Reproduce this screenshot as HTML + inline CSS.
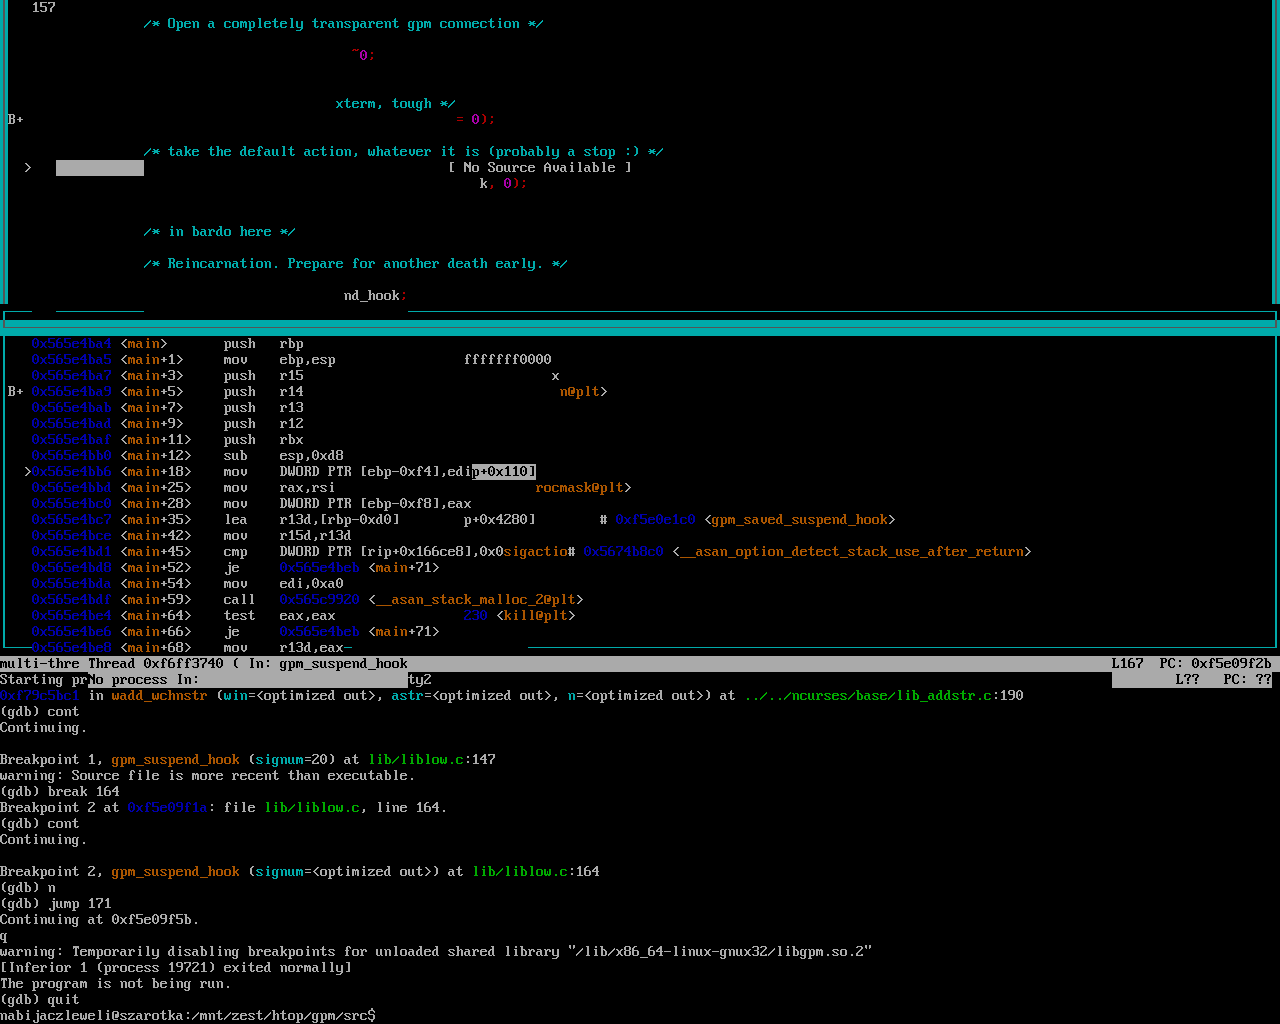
<!DOCTYPE html>
<html><head><meta charset="utf-8"><style>
html,body{margin:0;padding:0;background:#000;width:1280px;height:1024px;overflow:hidden}
svg{position:absolute;left:0;top:0;display:block}
#t div{position:absolute;left:0;white-space:pre;font-family:"Liberation Mono",monospace;font-size:13.33px;line-height:16px;color:transparent}
</style></head><body>
<div id="t">
<div style="top:0px">    157</div>
<div style="top:16px">                  /* Open a completely transparent gpm connection */</div>
<div style="top:48px">                                            ~0;</div>
<div style="top:96px">                                          xterm, tough */</div>
<div style="top:112px"> B+                                                      = 0);</div>
<div style="top:144px">                  /* take the default action, whatever it is (probably a stop :) */</div>
<div style="top:160px">   &gt;                                                    [ No Source Available ]</div>
<div style="top:176px">                                                            k, 0);</div>
<div style="top:224px">                  /* in bardo here */</div>
<div style="top:256px">                  /* Reincarnation. Prepare for another death early. */</div>
<div style="top:288px">                                           nd_hook;</div>
<div style="top:336px">    0x565e4ba4 &lt;main&gt;       push   rbp</div>
<div style="top:352px">    0x565e4ba5 &lt;main+1&gt;     mov    ebp,esp                fffffff0000</div>
<div style="top:368px">    0x565e4ba7 &lt;main+3&gt;     push   r15                               x</div>
<div style="top:384px"> B+ 0x565e4ba9 &lt;main+5&gt;     push   r14                                n@plt&gt;</div>
<div style="top:400px">    0x565e4bab &lt;main+7&gt;     push   r13</div>
<div style="top:416px">    0x565e4bad &lt;main+9&gt;     push   r12</div>
<div style="top:432px">    0x565e4baf &lt;main+11&gt;    push   rbx</div>
<div style="top:448px">    0x565e4bb0 &lt;main+12&gt;    sub    esp,0xd8</div>
<div style="top:464px">   &gt;0x565e4bb6 &lt;main+18&gt;    mov    DWORD PTR [ebp-0xf4],edip+0x110]</div>
<div style="top:480px">    0x565e4bbd &lt;main+25&gt;    mov    rax,rsi                         rocmask@plt&gt;</div>
<div style="top:496px">    0x565e4bc0 &lt;main+28&gt;    mov    DWORD PTR [ebp-0xf8],eax</div>
<div style="top:512px">    0x565e4bc7 &lt;main+35&gt;    lea    r13d,[rbp-0xd0]        p+0x4280]        # 0xf5e0e1c0 &lt;gpm_saved_suspend_hook&gt;</div>
<div style="top:528px">    0x565e4bce &lt;main+42&gt;    mov    r15d,r13d</div>
<div style="top:544px">    0x565e4bd1 &lt;main+45&gt;    cmp    DWORD PTR [rip+0x166ce8],0x0sigactio# 0x5674b8c0 &lt;__asan_option_detect_stack_use_after_return&gt;</div>
<div style="top:560px">    0x565e4bd8 &lt;main+52&gt;    je     0x565e4beb &lt;main+71&gt;</div>
<div style="top:576px">    0x565e4bda &lt;main+54&gt;    mov    edi,0xa0</div>
<div style="top:592px">    0x565e4bdf &lt;main+59&gt;    call   0x565c9920 &lt;__asan_stack_malloc_2@plt&gt;</div>
<div style="top:608px">    0x565e4be4 &lt;main+64&gt;    test   eax,eax                230 &lt;kill@plt&gt;</div>
<div style="top:624px">    0x565e4be6 &lt;main+66&gt;    je     0x565e4beb &lt;main+71&gt;</div>
<div style="top:640px">    0x565e4be8 &lt;main+68&gt;    mov    r13d,eax</div>
<div style="top:656px">multi-thre Thread 0xf6ff3740 ( In: gpm_suspend_hook                                                                                        L167  PC: 0xf5e09f2b</div>
<div style="top:672px">Starting prNo process In:                          ty2                                                                                             L??   PC: ??</div>
<div style="top:688px">0xf79c5bc1 in wadd_wchnstr (win=&lt;optimized out&gt;, astr=&lt;optimized out&gt;, n=&lt;optimized out&gt;) at ../../ncurses/base/lib_addstr.c:190</div>
<div style="top:704px">(gdb) cont</div>
<div style="top:720px">Continuing.</div>
<div style="top:752px">Breakpoint 1, gpm_suspend_hook (signum=20) at lib/liblow.c:147</div>
<div style="top:768px">warning: Source file is more recent than executable.</div>
<div style="top:784px">(gdb) break 164</div>
<div style="top:800px">Breakpoint 2 at 0xf5e09f1a: file lib/liblow.c, line 164.</div>
<div style="top:816px">(gdb) cont</div>
<div style="top:832px">Continuing.</div>
<div style="top:864px">Breakpoint 2, gpm_suspend_hook (signum=&lt;optimized out&gt;) at lib/liblow.c:164</div>
<div style="top:880px">(gdb) n</div>
<div style="top:896px">(gdb) jump 171</div>
<div style="top:912px">Continuing at 0xf5e09f5b.</div>
<div style="top:928px">q</div>
<div style="top:944px">warning: Temporarily disabling breakpoints for unloaded shared library &quot;/lib/x86_64-linux-gnux32/libgpm.so.2&quot;</div>
<div style="top:960px">[Inferior 1 (process 19721) exited normally]</div>
<div style="top:976px">The program is not being run.</div>
<div style="top:992px">(gdb) quit</div>
<div style="top:1008px">nabijaczleweli@szarotka:/mnt/zest/htop/gpm/src$</div>
</div>
<svg width="1280" height="1024" viewBox="0 0 1280 1024" shape-rendering="crispEdges">
<defs>
<path id="g22" d="M1 1h2v1h-2zM5 1h2v1h-2zM1 2h2v1h-2zM5 2h2v1h-2zM1 3h2v1h-2zM5 3h2v1h-2zM2 4h1v1h-1zM5 4h1v1h-1z"/>
<path id="g23" d="M1 3h2v1h-2zM4 3h2v1h-2zM1 4h2v1h-2zM4 4h2v1h-2zM0 5h7v1h-7zM1 6h2v1h-2zM4 6h2v1h-2zM1 7h2v1h-2zM4 7h2v1h-2zM1 8h2v1h-2zM4 8h2v1h-2zM0 9h7v1h-7zM1 10h2v1h-2zM4 10h2v1h-2zM1 11h2v1h-2zM4 11h2v1h-2z"/>
<path id="g24" d="M3 0h2v1h-2zM3 1h2v1h-2zM1 2h5v1h-5zM0 3h2v1h-2zM5 3h2v1h-2zM0 4h2v1h-2zM6 4h1v1h-1zM0 5h2v1h-2zM1 6h5v1h-5zM5 7h2v1h-2zM5 8h2v1h-2zM0 9h1v1h-1zM5 9h2v1h-2zM0 10h2v1h-2zM5 10h2v1h-2zM1 11h5v1h-5zM3 12h2v1h-2zM3 13h2v1h-2z"/>
<path id="g28" d="M4 2h2v1h-2zM3 3h2v1h-2zM2 4h2v1h-2zM2 5h2v1h-2zM2 6h2v1h-2zM2 7h2v1h-2zM2 8h2v1h-2zM2 9h2v1h-2zM3 10h2v1h-2zM4 11h2v1h-2z"/>
<path id="g29" d="M2 2h2v1h-2zM3 3h2v1h-2zM4 4h2v1h-2zM4 5h2v1h-2zM4 6h2v1h-2zM4 7h2v1h-2zM4 8h2v1h-2zM4 9h2v1h-2zM3 10h2v1h-2zM2 11h2v1h-2z"/>
<path id="g2a" d="M1 5h2v1h-2zM5 5h2v1h-2zM2 6h4v1h-4zM0 7h8v1h-8zM2 8h4v1h-4zM1 9h2v1h-2zM5 9h2v1h-2z"/>
<path id="g2b" d="M3 5h2v1h-2zM3 6h2v1h-2zM1 7h6v1h-6zM3 8h2v1h-2zM3 9h2v1h-2z"/>
<path id="g2c" d="M3 9h2v1h-2zM3 10h2v1h-2zM3 11h2v1h-2zM2 12h2v1h-2z"/>
<path id="g2d" d="M0 7h7v1h-7z"/>
<path id="g2e" d="M3 10h2v1h-2zM3 11h2v1h-2z"/>
<path id="g2f" d="M6 4h1v1h-1zM5 5h2v1h-2zM4 6h2v1h-2zM3 7h2v1h-2zM2 8h2v1h-2zM1 9h2v1h-2zM0 10h2v1h-2zM0 11h1v1h-1z"/>
<path id="g30" d="M2 2h3v1h-3zM1 3h2v1h-2zM4 3h2v1h-2zM0 4h2v1h-2zM5 4h2v1h-2zM0 5h2v1h-2zM5 5h2v1h-2zM0 6h2v1h-2zM3 6h1v1h-1zM5 6h2v1h-2zM0 7h2v1h-2zM3 7h1v1h-1zM5 7h2v1h-2zM0 8h2v1h-2zM5 8h2v1h-2zM0 9h2v1h-2zM5 9h2v1h-2zM1 10h2v1h-2zM4 10h2v1h-2zM2 11h3v1h-3z"/>
<path id="g31" d="M3 2h2v1h-2zM2 3h3v1h-3zM1 4h4v1h-4zM3 5h2v1h-2zM3 6h2v1h-2zM3 7h2v1h-2zM3 8h2v1h-2zM3 9h2v1h-2zM3 10h2v1h-2zM1 11h6v1h-6z"/>
<path id="g32" d="M1 2h5v1h-5zM0 3h2v1h-2zM5 3h2v1h-2zM5 4h2v1h-2zM4 5h2v1h-2zM3 6h2v1h-2zM2 7h2v1h-2zM1 8h2v1h-2zM0 9h2v1h-2zM0 10h2v1h-2zM5 10h2v1h-2zM0 11h7v1h-7z"/>
<path id="g33" d="M1 2h5v1h-5zM0 3h2v1h-2zM5 3h2v1h-2zM5 4h2v1h-2zM5 5h2v1h-2zM2 6h4v1h-4zM5 7h2v1h-2zM5 8h2v1h-2zM5 9h2v1h-2zM0 10h2v1h-2zM5 10h2v1h-2zM1 11h5v1h-5z"/>
<path id="g34" d="M4 2h2v1h-2zM3 3h3v1h-3zM2 4h4v1h-4zM1 5h2v1h-2zM4 5h2v1h-2zM0 6h2v1h-2zM4 6h2v1h-2zM0 7h7v1h-7zM4 8h2v1h-2zM4 9h2v1h-2zM4 10h2v1h-2zM3 11h4v1h-4z"/>
<path id="g35" d="M0 2h7v1h-7zM0 3h2v1h-2zM0 4h2v1h-2zM0 5h2v1h-2zM0 6h6v1h-6zM5 7h2v1h-2zM5 8h2v1h-2zM5 9h2v1h-2zM0 10h2v1h-2zM5 10h2v1h-2zM1 11h5v1h-5z"/>
<path id="g36" d="M2 2h3v1h-3zM1 3h2v1h-2zM0 4h2v1h-2zM0 5h2v1h-2zM0 6h6v1h-6zM0 7h2v1h-2zM5 7h2v1h-2zM0 8h2v1h-2zM5 8h2v1h-2zM0 9h2v1h-2zM5 9h2v1h-2zM0 10h2v1h-2zM5 10h2v1h-2zM1 11h5v1h-5z"/>
<path id="g37" d="M0 2h7v1h-7zM0 3h2v1h-2zM5 3h2v1h-2zM5 4h2v1h-2zM5 5h2v1h-2zM4 6h2v1h-2zM3 7h2v1h-2zM2 8h2v1h-2zM2 9h2v1h-2zM2 10h2v1h-2zM2 11h2v1h-2z"/>
<path id="g38" d="M1 2h5v1h-5zM0 3h2v1h-2zM5 3h2v1h-2zM0 4h2v1h-2zM5 4h2v1h-2zM0 5h2v1h-2zM5 5h2v1h-2zM1 6h5v1h-5zM0 7h2v1h-2zM5 7h2v1h-2zM0 8h2v1h-2zM5 8h2v1h-2zM0 9h2v1h-2zM5 9h2v1h-2zM0 10h2v1h-2zM5 10h2v1h-2zM1 11h5v1h-5z"/>
<path id="g39" d="M1 2h5v1h-5zM0 3h2v1h-2zM5 3h2v1h-2zM0 4h2v1h-2zM5 4h2v1h-2zM0 5h2v1h-2zM5 5h2v1h-2zM1 6h6v1h-6zM5 7h2v1h-2zM5 8h2v1h-2zM5 9h2v1h-2zM4 10h2v1h-2zM1 11h4v1h-4z"/>
<path id="g3a" d="M3 4h2v1h-2zM3 5h2v1h-2zM3 9h2v1h-2zM3 10h2v1h-2z"/>
<path id="g3b" d="M3 4h2v1h-2zM3 5h2v1h-2zM3 9h2v1h-2zM3 10h2v1h-2zM2 11h2v1h-2z"/>
<path id="g3c" d="M5 3h2v1h-2zM4 4h2v1h-2zM3 5h2v1h-2zM2 6h2v1h-2zM1 7h2v1h-2zM2 8h2v1h-2zM3 9h2v1h-2zM4 10h2v1h-2zM5 11h2v1h-2z"/>
<path id="g3d" d="M1 5h6v1h-6zM1 8h6v1h-6z"/>
<path id="g3e" d="M1 3h2v1h-2zM2 4h2v1h-2zM3 5h2v1h-2zM4 6h2v1h-2zM5 7h2v1h-2zM4 8h2v1h-2zM3 9h2v1h-2zM2 10h2v1h-2zM1 11h2v1h-2z"/>
<path id="g3f" d="M1 2h5v1h-5zM0 3h2v1h-2zM5 3h2v1h-2zM0 4h2v1h-2zM5 4h2v1h-2zM4 5h2v1h-2zM3 6h2v1h-2zM3 7h2v1h-2zM3 8h2v1h-2zM3 10h2v1h-2zM3 11h2v1h-2z"/>
<path id="g40" d="M1 3h5v1h-5zM0 4h2v1h-2zM5 4h2v1h-2zM0 5h2v1h-2zM5 5h2v1h-2zM0 6h2v1h-2zM3 6h4v1h-4zM0 7h2v1h-2zM3 7h4v1h-4zM0 8h2v1h-2zM3 8h4v1h-4zM0 9h2v1h-2zM3 9h3v1h-3zM0 10h2v1h-2zM1 11h5v1h-5z"/>
<path id="g41" d="M3 2h1v1h-1zM2 3h3v1h-3zM1 4h2v1h-2zM4 4h2v1h-2zM0 5h2v1h-2zM5 5h2v1h-2zM0 6h2v1h-2zM5 6h2v1h-2zM0 7h7v1h-7zM0 8h2v1h-2zM5 8h2v1h-2zM0 9h2v1h-2zM5 9h2v1h-2zM0 10h2v1h-2zM5 10h2v1h-2zM0 11h2v1h-2zM5 11h2v1h-2z"/>
<path id="g42" d="M0 2h6v1h-6zM1 3h2v1h-2zM5 3h2v1h-2zM1 4h2v1h-2zM5 4h2v1h-2zM1 5h2v1h-2zM5 5h2v1h-2zM1 6h5v1h-5zM1 7h2v1h-2zM5 7h2v1h-2zM1 8h2v1h-2zM5 8h2v1h-2zM1 9h2v1h-2zM5 9h2v1h-2zM1 10h2v1h-2zM5 10h2v1h-2zM0 11h6v1h-6z"/>
<path id="g43" d="M2 2h4v1h-4zM1 3h2v1h-2zM5 3h2v1h-2zM0 4h2v1h-2zM6 4h1v1h-1zM0 5h2v1h-2zM0 6h2v1h-2zM0 7h2v1h-2zM0 8h2v1h-2zM0 9h2v1h-2zM6 9h1v1h-1zM1 10h2v1h-2zM5 10h2v1h-2zM2 11h4v1h-4z"/>
<path id="g44" d="M0 2h5v1h-5zM1 3h2v1h-2zM4 3h2v1h-2zM1 4h2v1h-2zM5 4h2v1h-2zM1 5h2v1h-2zM5 5h2v1h-2zM1 6h2v1h-2zM5 6h2v1h-2zM1 7h2v1h-2zM5 7h2v1h-2zM1 8h2v1h-2zM5 8h2v1h-2zM1 9h2v1h-2zM5 9h2v1h-2zM1 10h2v1h-2zM4 10h2v1h-2zM0 11h5v1h-5z"/>
<path id="g49" d="M2 2h4v1h-4zM3 3h2v1h-2zM3 4h2v1h-2zM3 5h2v1h-2zM3 6h2v1h-2zM3 7h2v1h-2zM3 8h2v1h-2zM3 9h2v1h-2zM3 10h2v1h-2zM2 11h4v1h-4z"/>
<path id="g4c" d="M0 2h4v1h-4zM1 3h2v1h-2zM1 4h2v1h-2zM1 5h2v1h-2zM1 6h2v1h-2zM1 7h2v1h-2zM1 8h2v1h-2zM1 9h2v1h-2zM6 9h1v1h-1zM1 10h2v1h-2zM5 10h2v1h-2zM0 11h7v1h-7z"/>
<path id="g4e" d="M0 2h2v1h-2zM5 2h2v1h-2zM0 3h3v1h-3zM5 3h2v1h-2zM0 4h4v1h-4zM5 4h2v1h-2zM0 5h7v1h-7zM0 6h2v1h-2zM3 6h4v1h-4zM0 7h2v1h-2zM4 7h3v1h-3zM0 8h2v1h-2zM5 8h2v1h-2zM0 9h2v1h-2zM5 9h2v1h-2zM0 10h2v1h-2zM5 10h2v1h-2zM0 11h2v1h-2zM5 11h2v1h-2z"/>
<path id="g4f" d="M1 2h5v1h-5zM0 3h2v1h-2zM5 3h2v1h-2zM0 4h2v1h-2zM5 4h2v1h-2zM0 5h2v1h-2zM5 5h2v1h-2zM0 6h2v1h-2zM5 6h2v1h-2zM0 7h2v1h-2zM5 7h2v1h-2zM0 8h2v1h-2zM5 8h2v1h-2zM0 9h2v1h-2zM5 9h2v1h-2zM0 10h2v1h-2zM5 10h2v1h-2zM1 11h5v1h-5z"/>
<path id="g50" d="M0 2h6v1h-6zM1 3h2v1h-2zM5 3h2v1h-2zM1 4h2v1h-2zM5 4h2v1h-2zM1 5h2v1h-2zM5 5h2v1h-2zM1 6h5v1h-5zM1 7h2v1h-2zM1 8h2v1h-2zM1 9h2v1h-2zM1 10h2v1h-2zM0 11h4v1h-4z"/>
<path id="g52" d="M0 2h6v1h-6zM1 3h2v1h-2zM5 3h2v1h-2zM1 4h2v1h-2zM5 4h2v1h-2zM1 5h2v1h-2zM5 5h2v1h-2zM1 6h5v1h-5zM1 7h2v1h-2zM4 7h2v1h-2zM1 8h2v1h-2zM5 8h2v1h-2zM1 9h2v1h-2zM5 9h2v1h-2zM1 10h2v1h-2zM5 10h2v1h-2zM0 11h3v1h-3zM5 11h2v1h-2z"/>
<path id="g53" d="M1 2h5v1h-5zM0 3h2v1h-2zM5 3h2v1h-2zM0 4h2v1h-2zM5 4h2v1h-2zM1 5h2v1h-2zM2 6h3v1h-3zM4 7h2v1h-2zM5 8h2v1h-2zM0 9h2v1h-2zM5 9h2v1h-2zM0 10h2v1h-2zM5 10h2v1h-2zM1 11h5v1h-5z"/>
<path id="g54" d="M1 2h6v1h-6zM1 3h6v1h-6zM1 4h1v1h-1zM3 4h2v1h-2zM6 4h1v1h-1zM3 5h2v1h-2zM3 6h2v1h-2zM3 7h2v1h-2zM3 8h2v1h-2zM3 9h2v1h-2zM3 10h2v1h-2zM2 11h4v1h-4z"/>
<path id="g57" d="M0 2h2v1h-2zM5 2h2v1h-2zM0 3h2v1h-2zM5 3h2v1h-2zM0 4h2v1h-2zM5 4h2v1h-2zM0 5h2v1h-2zM5 5h2v1h-2zM0 6h2v1h-2zM3 6h1v1h-1zM5 6h2v1h-2zM0 7h2v1h-2zM3 7h1v1h-1zM5 7h2v1h-2zM0 8h2v1h-2zM3 8h1v1h-1zM5 8h2v1h-2zM0 9h7v1h-7zM0 10h3v1h-3zM4 10h3v1h-3zM1 11h2v1h-2zM4 11h2v1h-2z"/>
<path id="g5b" d="M2 2h4v1h-4zM2 3h2v1h-2zM2 4h2v1h-2zM2 5h2v1h-2zM2 6h2v1h-2zM2 7h2v1h-2zM2 8h2v1h-2zM2 9h2v1h-2zM2 10h2v1h-2zM2 11h4v1h-4z"/>
<path id="g5d" d="M2 2h4v1h-4zM4 3h2v1h-2zM4 4h2v1h-2zM4 5h2v1h-2zM4 6h2v1h-2zM4 7h2v1h-2zM4 8h2v1h-2zM4 9h2v1h-2zM4 10h2v1h-2zM2 11h4v1h-4z"/>
<path id="g5f" d="M0 13h8v1h-8z"/>
<path id="g61" d="M1 5h4v1h-4zM4 6h2v1h-2zM1 7h5v1h-5zM0 8h2v1h-2zM4 8h2v1h-2zM0 9h2v1h-2zM4 9h2v1h-2zM0 10h2v1h-2zM4 10h2v1h-2zM1 11h3v1h-3zM5 11h2v1h-2z"/>
<path id="g62" d="M0 2h3v1h-3zM1 3h2v1h-2zM1 4h2v1h-2zM1 5h4v1h-4zM1 6h2v1h-2zM4 6h2v1h-2zM1 7h2v1h-2zM5 7h2v1h-2zM1 8h2v1h-2zM5 8h2v1h-2zM1 9h2v1h-2zM5 9h2v1h-2zM1 10h2v1h-2zM5 10h2v1h-2zM1 11h5v1h-5z"/>
<path id="g63" d="M1 5h5v1h-5zM0 6h2v1h-2zM5 6h2v1h-2zM0 7h2v1h-2zM0 8h2v1h-2zM0 9h2v1h-2zM0 10h2v1h-2zM5 10h2v1h-2zM1 11h5v1h-5z"/>
<path id="g64" d="M3 2h3v1h-3zM4 3h2v1h-2zM4 4h2v1h-2zM2 5h4v1h-4zM1 6h2v1h-2zM4 6h2v1h-2zM0 7h2v1h-2zM4 7h2v1h-2zM0 8h2v1h-2zM4 8h2v1h-2zM0 9h2v1h-2zM4 9h2v1h-2zM0 10h2v1h-2zM4 10h2v1h-2zM1 11h3v1h-3zM5 11h2v1h-2z"/>
<path id="g65" d="M1 5h5v1h-5zM0 6h2v1h-2zM5 6h2v1h-2zM0 7h7v1h-7zM0 8h2v1h-2zM0 9h2v1h-2zM0 10h2v1h-2zM5 10h2v1h-2zM1 11h5v1h-5z"/>
<path id="g66" d="M3 2h3v1h-3zM2 3h2v1h-2zM5 3h2v1h-2zM2 4h2v1h-2zM6 4h1v1h-1zM2 5h2v1h-2zM1 6h4v1h-4zM2 7h2v1h-2zM2 8h2v1h-2zM2 9h2v1h-2zM2 10h2v1h-2zM1 11h4v1h-4z"/>
<path id="g67" d="M1 5h3v1h-3zM5 5h2v1h-2zM0 6h2v1h-2zM4 6h2v1h-2zM0 7h2v1h-2zM4 7h2v1h-2zM0 8h2v1h-2zM4 8h2v1h-2zM0 9h2v1h-2zM4 9h2v1h-2zM0 10h2v1h-2zM4 10h2v1h-2zM1 11h5v1h-5zM4 12h2v1h-2zM0 13h2v1h-2zM4 13h2v1h-2zM1 14h4v1h-4z"/>
<path id="g68" d="M0 2h3v1h-3zM1 3h2v1h-2zM1 4h2v1h-2zM1 5h2v1h-2zM4 5h2v1h-2zM1 6h3v1h-3zM5 6h2v1h-2zM1 7h2v1h-2zM5 7h2v1h-2zM1 8h2v1h-2zM5 8h2v1h-2zM1 9h2v1h-2zM5 9h2v1h-2zM1 10h2v1h-2zM5 10h2v1h-2zM0 11h3v1h-3zM5 11h2v1h-2z"/>
<path id="g69" d="M3 2h2v1h-2zM3 3h2v1h-2zM2 5h3v1h-3zM3 6h2v1h-2zM3 7h2v1h-2zM3 8h2v1h-2zM3 9h2v1h-2zM3 10h2v1h-2zM2 11h4v1h-4z"/>
<path id="g6a" d="M5 2h2v1h-2zM5 3h2v1h-2zM4 5h3v1h-3zM5 6h2v1h-2zM5 7h2v1h-2zM5 8h2v1h-2zM5 9h2v1h-2zM5 10h2v1h-2zM5 11h2v1h-2zM1 12h2v1h-2zM5 12h2v1h-2zM1 13h2v1h-2zM5 13h2v1h-2zM2 14h4v1h-4z"/>
<path id="g6b" d="M0 2h3v1h-3zM1 3h2v1h-2zM1 4h2v1h-2zM1 5h2v1h-2zM5 5h2v1h-2zM1 6h2v1h-2zM4 6h2v1h-2zM1 7h4v1h-4zM1 8h4v1h-4zM1 9h2v1h-2zM4 9h2v1h-2zM1 10h2v1h-2zM5 10h2v1h-2zM0 11h3v1h-3zM5 11h2v1h-2z"/>
<path id="g6c" d="M2 2h3v1h-3zM3 3h2v1h-2zM3 4h2v1h-2zM3 5h2v1h-2zM3 6h2v1h-2zM3 7h2v1h-2zM3 8h2v1h-2zM3 9h2v1h-2zM3 10h2v1h-2zM2 11h4v1h-4z"/>
<path id="g6d" d="M0 5h3v1h-3zM4 5h2v1h-2zM0 6h7v1h-7zM0 7h2v1h-2zM3 7h1v1h-1zM5 7h2v1h-2zM0 8h2v1h-2zM3 8h1v1h-1zM5 8h2v1h-2zM0 9h2v1h-2zM3 9h1v1h-1zM5 9h2v1h-2zM0 10h2v1h-2zM3 10h1v1h-1zM5 10h2v1h-2zM0 11h2v1h-2zM5 11h2v1h-2z"/>
<path id="g6e" d="M0 5h2v1h-2zM3 5h3v1h-3zM1 6h2v1h-2zM5 6h2v1h-2zM1 7h2v1h-2zM5 7h2v1h-2zM1 8h2v1h-2zM5 8h2v1h-2zM1 9h2v1h-2zM5 9h2v1h-2zM1 10h2v1h-2zM5 10h2v1h-2zM1 11h2v1h-2zM5 11h2v1h-2z"/>
<path id="g6f" d="M1 5h5v1h-5zM0 6h2v1h-2zM5 6h2v1h-2zM0 7h2v1h-2zM5 7h2v1h-2zM0 8h2v1h-2zM5 8h2v1h-2zM0 9h2v1h-2zM5 9h2v1h-2zM0 10h2v1h-2zM5 10h2v1h-2zM1 11h5v1h-5z"/>
<path id="g70" d="M0 5h2v1h-2zM3 5h3v1h-3zM1 6h2v1h-2zM5 6h2v1h-2zM1 7h2v1h-2zM5 7h2v1h-2zM1 8h2v1h-2zM5 8h2v1h-2zM1 9h2v1h-2zM5 9h2v1h-2zM1 10h2v1h-2zM5 10h2v1h-2zM1 11h5v1h-5zM1 12h2v1h-2zM1 13h2v1h-2zM0 14h4v1h-4z"/>
<path id="g71" d="M1 5h3v1h-3zM5 5h2v1h-2zM0 6h2v1h-2zM4 6h2v1h-2zM0 7h2v1h-2zM4 7h2v1h-2zM0 8h2v1h-2zM4 8h2v1h-2zM0 9h2v1h-2zM4 9h2v1h-2zM0 10h2v1h-2zM4 10h2v1h-2zM1 11h5v1h-5zM4 12h2v1h-2zM4 13h2v1h-2zM3 14h4v1h-4z"/>
<path id="g72" d="M0 5h2v1h-2zM3 5h3v1h-3zM1 6h3v1h-3zM5 6h2v1h-2zM1 7h2v1h-2zM5 7h2v1h-2zM1 8h2v1h-2zM1 9h2v1h-2zM1 10h2v1h-2zM0 11h4v1h-4z"/>
<path id="g73" d="M1 5h5v1h-5zM0 6h2v1h-2zM5 6h2v1h-2zM1 7h2v1h-2zM2 8h3v1h-3zM4 9h2v1h-2zM0 10h2v1h-2zM5 10h2v1h-2zM1 11h5v1h-5z"/>
<path id="g74" d="M3 2h1v1h-1zM2 3h2v1h-2zM2 4h2v1h-2zM0 5h6v1h-6zM2 6h2v1h-2zM2 7h2v1h-2zM2 8h2v1h-2zM2 9h2v1h-2zM2 10h2v1h-2zM5 10h2v1h-2zM3 11h3v1h-3z"/>
<path id="g75" d="M0 5h2v1h-2zM4 5h2v1h-2zM0 6h2v1h-2zM4 6h2v1h-2zM0 7h2v1h-2zM4 7h2v1h-2zM0 8h2v1h-2zM4 8h2v1h-2zM0 9h2v1h-2zM4 9h2v1h-2zM0 10h2v1h-2zM4 10h2v1h-2zM1 11h3v1h-3zM5 11h2v1h-2z"/>
<path id="g76" d="M1 5h2v1h-2zM5 5h2v1h-2zM1 6h2v1h-2zM5 6h2v1h-2zM1 7h2v1h-2zM5 7h2v1h-2zM1 8h2v1h-2zM5 8h2v1h-2zM1 9h2v1h-2zM5 9h2v1h-2zM2 10h4v1h-4zM3 11h2v1h-2z"/>
<path id="g77" d="M0 5h2v1h-2zM5 5h2v1h-2zM0 6h2v1h-2zM5 6h2v1h-2zM0 7h2v1h-2zM3 7h1v1h-1zM5 7h2v1h-2zM0 8h2v1h-2zM3 8h1v1h-1zM5 8h2v1h-2zM0 9h2v1h-2zM3 9h1v1h-1zM5 9h2v1h-2zM0 10h7v1h-7zM1 11h2v1h-2zM4 11h2v1h-2z"/>
<path id="g78" d="M0 5h2v1h-2zM5 5h2v1h-2zM1 6h2v1h-2zM4 6h2v1h-2zM2 7h3v1h-3zM2 8h3v1h-3zM2 9h3v1h-3zM1 10h2v1h-2zM4 10h2v1h-2zM0 11h2v1h-2zM5 11h2v1h-2z"/>
<path id="g79" d="M0 5h2v1h-2zM5 5h2v1h-2zM0 6h2v1h-2zM5 6h2v1h-2zM0 7h2v1h-2zM5 7h2v1h-2zM0 8h2v1h-2zM5 8h2v1h-2zM0 9h2v1h-2zM5 9h2v1h-2zM0 10h2v1h-2zM5 10h2v1h-2zM1 11h6v1h-6zM5 12h2v1h-2zM4 13h2v1h-2zM0 14h5v1h-5z"/>
<path id="g7a" d="M0 5h7v1h-7zM0 6h2v1h-2zM4 6h2v1h-2zM3 7h2v1h-2zM2 8h2v1h-2zM1 9h2v1h-2zM0 10h2v1h-2zM5 10h2v1h-2zM0 11h7v1h-7z"/>
<path id="g7e" d="M1 1h3v1h-3zM5 1h2v1h-2zM0 2h2v1h-2zM3 2h3v1h-3z"/>
</defs>
<rect x="0" y="0" width="1280" height="1024" fill="#000"/>
<rect x="56" y="160" width="88" height="16" fill="#aaaaaa"/>
<rect x="472" y="464" width="64" height="16" fill="#aaaaaa"/>
<rect x="0" y="656" width="1280" height="16" fill="#aaaaaa"/>
<rect x="88" y="672" width="320" height="16" fill="#aaaaaa"/>
<rect x="1112" y="672" width="160" height="16" fill="#aaaaaa"/>
<rect x="0" y="0" width="8" height="304" fill="#00aaaa"/>
<rect x="3" y="0" width="2" height="304" fill="#555555"/>
<rect x="1272" y="0" width="8" height="304" fill="#00aaaa"/>
<rect x="1275" y="0" width="2" height="304" fill="#555555"/>
<rect x="3" y="311" width="29" height="1" fill="#00aaaa"/>
<rect x="56" y="311" width="88" height="1" fill="#00aaaa"/>
<rect x="408" y="311" width="869" height="1" fill="#00aaaa"/>
<rect x="3" y="311" width="2" height="9" fill="#00aaaa"/>
<rect x="1275" y="311" width="2" height="9" fill="#00aaaa"/>
<rect x="0" y="320" width="1280" height="16" fill="#00aaaa"/>
<rect x="3" y="320" width="2" height="8" fill="#555555"/>
<rect x="1275" y="320" width="2" height="8" fill="#555555"/>
<rect x="3" y="327" width="1274" height="1" fill="#555555"/>
<rect x="3" y="336" width="2" height="312" fill="#00aaaa"/>
<rect x="1275" y="336" width="2" height="312" fill="#00aaaa"/>
<rect x="3" y="647" width="29" height="1" fill="#00aaaa"/>
<rect x="344" y="647" width="8" height="1" fill="#00aaaa"/>
<rect x="528" y="647" width="749" height="1" fill="#00aaaa"/>
<g fill="#aaaaaa" transform="translate(32,0)"><use href="#g31" x="0"/><use href="#g35" x="8"/><use href="#g37" x="16"/></g>
<g fill="#00aaaa" transform="translate(144,16)"><use href="#g2f" x="0"/><use href="#g2a" x="8"/><use href="#g4f" x="24"/><use href="#g70" x="32"/><use href="#g65" x="40"/><use href="#g6e" x="48"/><use href="#g61" x="64"/><use href="#g63" x="80"/><use href="#g6f" x="88"/><use href="#g6d" x="96"/><use href="#g70" x="104"/><use href="#g6c" x="112"/><use href="#g65" x="120"/><use href="#g74" x="128"/><use href="#g65" x="136"/><use href="#g6c" x="144"/><use href="#g79" x="152"/><use href="#g74" x="168"/><use href="#g72" x="176"/><use href="#g61" x="184"/><use href="#g6e" x="192"/><use href="#g73" x="200"/><use href="#g70" x="208"/><use href="#g61" x="216"/><use href="#g72" x="224"/><use href="#g65" x="232"/><use href="#g6e" x="240"/><use href="#g74" x="248"/><use href="#g67" x="264"/><use href="#g70" x="272"/><use href="#g6d" x="280"/><use href="#g63" x="296"/><use href="#g6f" x="304"/><use href="#g6e" x="312"/><use href="#g6e" x="320"/><use href="#g65" x="328"/><use href="#g63" x="336"/><use href="#g74" x="344"/><use href="#g69" x="352"/><use href="#g6f" x="360"/><use href="#g6e" x="368"/><use href="#g2a" x="384"/><use href="#g2f" x="392"/></g>
<g fill="#aa0000" transform="translate(352,48)"><use href="#g7e" x="0"/></g>
<g fill="#aa00aa" transform="translate(360,48)"><use href="#g30" x="0"/></g>
<g fill="#aa0000" transform="translate(368,48)"><use href="#g3b" x="0"/></g>
<g fill="#00aaaa" transform="translate(336,96)"><use href="#g78" x="0"/><use href="#g74" x="8"/><use href="#g65" x="16"/><use href="#g72" x="24"/><use href="#g6d" x="32"/><use href="#g2c" x="40"/><use href="#g74" x="56"/><use href="#g6f" x="64"/><use href="#g75" x="72"/><use href="#g67" x="80"/><use href="#g68" x="88"/><use href="#g2a" x="104"/><use href="#g2f" x="112"/></g>
<g fill="#aaaaaa" transform="translate(8,112)"><use href="#g42" x="0"/><use href="#g2b" x="8"/></g>
<g fill="#aa0000" transform="translate(456,112)"><use href="#g3d" x="0"/></g>
<g fill="#aa00aa" transform="translate(472,112)"><use href="#g30" x="0"/></g>
<g fill="#aa0000" transform="translate(480,112)"><use href="#g29" x="0"/><use href="#g3b" x="8"/></g>
<g fill="#00aaaa" transform="translate(144,144)"><use href="#g2f" x="0"/><use href="#g2a" x="8"/><use href="#g74" x="24"/><use href="#g61" x="32"/><use href="#g6b" x="40"/><use href="#g65" x="48"/><use href="#g74" x="64"/><use href="#g68" x="72"/><use href="#g65" x="80"/><use href="#g64" x="96"/><use href="#g65" x="104"/><use href="#g66" x="112"/><use href="#g61" x="120"/><use href="#g75" x="128"/><use href="#g6c" x="136"/><use href="#g74" x="144"/><use href="#g61" x="160"/><use href="#g63" x="168"/><use href="#g74" x="176"/><use href="#g69" x="184"/><use href="#g6f" x="192"/><use href="#g6e" x="200"/><use href="#g2c" x="208"/><use href="#g77" x="224"/><use href="#g68" x="232"/><use href="#g61" x="240"/><use href="#g74" x="248"/><use href="#g65" x="256"/><use href="#g76" x="264"/><use href="#g65" x="272"/><use href="#g72" x="280"/><use href="#g69" x="296"/><use href="#g74" x="304"/><use href="#g69" x="320"/><use href="#g73" x="328"/><use href="#g28" x="344"/><use href="#g70" x="352"/><use href="#g72" x="360"/><use href="#g6f" x="368"/><use href="#g62" x="376"/><use href="#g61" x="384"/><use href="#g62" x="392"/><use href="#g6c" x="400"/><use href="#g79" x="408"/><use href="#g61" x="424"/><use href="#g73" x="440"/><use href="#g74" x="448"/><use href="#g6f" x="456"/><use href="#g70" x="464"/><use href="#g3a" x="480"/><use href="#g29" x="488"/><use href="#g2a" x="504"/><use href="#g2f" x="512"/></g>
<g fill="#aaaaaa" transform="translate(24,160)"><use href="#g3e" x="0"/></g>
<g fill="#aaaaaa" transform="translate(448,160)"><use href="#g5b" x="0"/><use href="#g4e" x="16"/><use href="#g6f" x="24"/><use href="#g53" x="40"/><use href="#g6f" x="48"/><use href="#g75" x="56"/><use href="#g72" x="64"/><use href="#g63" x="72"/><use href="#g65" x="80"/><use href="#g41" x="96"/><use href="#g76" x="104"/><use href="#g61" x="112"/><use href="#g69" x="120"/><use href="#g6c" x="128"/><use href="#g61" x="136"/><use href="#g62" x="144"/><use href="#g6c" x="152"/><use href="#g65" x="160"/><use href="#g5d" x="176"/></g>
<g fill="#aaaaaa" transform="translate(480,176)"><use href="#g6b" x="0"/></g>
<g fill="#aa0000" transform="translate(488,176)"><use href="#g2c" x="0"/></g>
<g fill="#aa00aa" transform="translate(504,176)"><use href="#g30" x="0"/></g>
<g fill="#aa0000" transform="translate(512,176)"><use href="#g29" x="0"/><use href="#g3b" x="8"/></g>
<g fill="#00aaaa" transform="translate(144,224)"><use href="#g2f" x="0"/><use href="#g2a" x="8"/><use href="#g69" x="24"/><use href="#g6e" x="32"/><use href="#g62" x="48"/><use href="#g61" x="56"/><use href="#g72" x="64"/><use href="#g64" x="72"/><use href="#g6f" x="80"/><use href="#g68" x="96"/><use href="#g65" x="104"/><use href="#g72" x="112"/><use href="#g65" x="120"/><use href="#g2a" x="136"/><use href="#g2f" x="144"/></g>
<g fill="#00aaaa" transform="translate(144,256)"><use href="#g2f" x="0"/><use href="#g2a" x="8"/><use href="#g52" x="24"/><use href="#g65" x="32"/><use href="#g69" x="40"/><use href="#g6e" x="48"/><use href="#g63" x="56"/><use href="#g61" x="64"/><use href="#g72" x="72"/><use href="#g6e" x="80"/><use href="#g61" x="88"/><use href="#g74" x="96"/><use href="#g69" x="104"/><use href="#g6f" x="112"/><use href="#g6e" x="120"/><use href="#g2e" x="128"/><use href="#g50" x="144"/><use href="#g72" x="152"/><use href="#g65" x="160"/><use href="#g70" x="168"/><use href="#g61" x="176"/><use href="#g72" x="184"/><use href="#g65" x="192"/><use href="#g66" x="208"/><use href="#g6f" x="216"/><use href="#g72" x="224"/><use href="#g61" x="240"/><use href="#g6e" x="248"/><use href="#g6f" x="256"/><use href="#g74" x="264"/><use href="#g68" x="272"/><use href="#g65" x="280"/><use href="#g72" x="288"/><use href="#g64" x="304"/><use href="#g65" x="312"/><use href="#g61" x="320"/><use href="#g74" x="328"/><use href="#g68" x="336"/><use href="#g65" x="352"/><use href="#g61" x="360"/><use href="#g72" x="368"/><use href="#g6c" x="376"/><use href="#g79" x="384"/><use href="#g2e" x="392"/><use href="#g2a" x="408"/><use href="#g2f" x="416"/></g>
<g fill="#aaaaaa" transform="translate(344,288)"><use href="#g6e" x="0"/><use href="#g64" x="8"/><use href="#g5f" x="16"/><use href="#g68" x="24"/><use href="#g6f" x="32"/><use href="#g6f" x="40"/><use href="#g6b" x="48"/></g>
<g fill="#aa0000" transform="translate(400,288)"><use href="#g3b" x="0"/></g>
<g fill="#0000aa" transform="translate(32,336)"><use href="#g30" x="0"/><use href="#g78" x="8"/><use href="#g35" x="16"/><use href="#g36" x="24"/><use href="#g35" x="32"/><use href="#g65" x="40"/><use href="#g34" x="48"/><use href="#g62" x="56"/><use href="#g61" x="64"/><use href="#g34" x="72"/></g>
<g fill="#aaaaaa" transform="translate(120,336)"><use href="#g3c" x="0"/></g>
<g fill="#aa5500" transform="translate(128,336)"><use href="#g6d" x="0"/><use href="#g61" x="8"/><use href="#g69" x="16"/><use href="#g6e" x="24"/></g>
<g fill="#aaaaaa" transform="translate(160,336)"><use href="#g3e" x="0"/></g>
<g fill="#aaaaaa" transform="translate(224,336)"><use href="#g70" x="0"/><use href="#g75" x="8"/><use href="#g73" x="16"/><use href="#g68" x="24"/></g>
<g fill="#aaaaaa" transform="translate(280,336)"><use href="#g72" x="0"/><use href="#g62" x="8"/><use href="#g70" x="16"/></g>
<g fill="#0000aa" transform="translate(32,352)"><use href="#g30" x="0"/><use href="#g78" x="8"/><use href="#g35" x="16"/><use href="#g36" x="24"/><use href="#g35" x="32"/><use href="#g65" x="40"/><use href="#g34" x="48"/><use href="#g62" x="56"/><use href="#g61" x="64"/><use href="#g35" x="72"/></g>
<g fill="#aaaaaa" transform="translate(120,352)"><use href="#g3c" x="0"/></g>
<g fill="#aa5500" transform="translate(128,352)"><use href="#g6d" x="0"/><use href="#g61" x="8"/><use href="#g69" x="16"/><use href="#g6e" x="24"/></g>
<g fill="#aaaaaa" transform="translate(160,352)"><use href="#g2b" x="0"/><use href="#g31" x="8"/><use href="#g3e" x="16"/></g>
<g fill="#aaaaaa" transform="translate(224,352)"><use href="#g6d" x="0"/><use href="#g6f" x="8"/><use href="#g76" x="16"/></g>
<g fill="#aaaaaa" transform="translate(280,352)"><use href="#g65" x="0"/><use href="#g62" x="8"/><use href="#g70" x="16"/><use href="#g2c" x="24"/><use href="#g65" x="32"/><use href="#g73" x="40"/><use href="#g70" x="48"/></g>
<g fill="#aaaaaa" transform="translate(464,352)"><use href="#g66" x="0"/><use href="#g66" x="8"/><use href="#g66" x="16"/><use href="#g66" x="24"/><use href="#g66" x="32"/><use href="#g66" x="40"/><use href="#g66" x="48"/><use href="#g30" x="56"/><use href="#g30" x="64"/><use href="#g30" x="72"/><use href="#g30" x="80"/></g>
<g fill="#0000aa" transform="translate(32,368)"><use href="#g30" x="0"/><use href="#g78" x="8"/><use href="#g35" x="16"/><use href="#g36" x="24"/><use href="#g35" x="32"/><use href="#g65" x="40"/><use href="#g34" x="48"/><use href="#g62" x="56"/><use href="#g61" x="64"/><use href="#g37" x="72"/></g>
<g fill="#aaaaaa" transform="translate(120,368)"><use href="#g3c" x="0"/></g>
<g fill="#aa5500" transform="translate(128,368)"><use href="#g6d" x="0"/><use href="#g61" x="8"/><use href="#g69" x="16"/><use href="#g6e" x="24"/></g>
<g fill="#aaaaaa" transform="translate(160,368)"><use href="#g2b" x="0"/><use href="#g33" x="8"/><use href="#g3e" x="16"/></g>
<g fill="#aaaaaa" transform="translate(224,368)"><use href="#g70" x="0"/><use href="#g75" x="8"/><use href="#g73" x="16"/><use href="#g68" x="24"/></g>
<g fill="#aaaaaa" transform="translate(280,368)"><use href="#g72" x="0"/><use href="#g31" x="8"/><use href="#g35" x="16"/></g>
<g fill="#aaaaaa" transform="translate(552,368)"><use href="#g78" x="0"/></g>
<g fill="#aaaaaa" transform="translate(8,384)"><use href="#g42" x="0"/><use href="#g2b" x="8"/></g>
<g fill="#0000aa" transform="translate(32,384)"><use href="#g30" x="0"/><use href="#g78" x="8"/><use href="#g35" x="16"/><use href="#g36" x="24"/><use href="#g35" x="32"/><use href="#g65" x="40"/><use href="#g34" x="48"/><use href="#g62" x="56"/><use href="#g61" x="64"/><use href="#g39" x="72"/></g>
<g fill="#aaaaaa" transform="translate(120,384)"><use href="#g3c" x="0"/></g>
<g fill="#aa5500" transform="translate(128,384)"><use href="#g6d" x="0"/><use href="#g61" x="8"/><use href="#g69" x="16"/><use href="#g6e" x="24"/></g>
<g fill="#aaaaaa" transform="translate(160,384)"><use href="#g2b" x="0"/><use href="#g35" x="8"/><use href="#g3e" x="16"/></g>
<g fill="#aaaaaa" transform="translate(224,384)"><use href="#g70" x="0"/><use href="#g75" x="8"/><use href="#g73" x="16"/><use href="#g68" x="24"/></g>
<g fill="#aaaaaa" transform="translate(280,384)"><use href="#g72" x="0"/><use href="#g31" x="8"/><use href="#g34" x="16"/></g>
<g fill="#aa5500" transform="translate(560,384)"><use href="#g6e" x="0"/><use href="#g40" x="8"/><use href="#g70" x="16"/><use href="#g6c" x="24"/><use href="#g74" x="32"/></g>
<g fill="#aaaaaa" transform="translate(600,384)"><use href="#g3e" x="0"/></g>
<g fill="#0000aa" transform="translate(32,400)"><use href="#g30" x="0"/><use href="#g78" x="8"/><use href="#g35" x="16"/><use href="#g36" x="24"/><use href="#g35" x="32"/><use href="#g65" x="40"/><use href="#g34" x="48"/><use href="#g62" x="56"/><use href="#g61" x="64"/><use href="#g62" x="72"/></g>
<g fill="#aaaaaa" transform="translate(120,400)"><use href="#g3c" x="0"/></g>
<g fill="#aa5500" transform="translate(128,400)"><use href="#g6d" x="0"/><use href="#g61" x="8"/><use href="#g69" x="16"/><use href="#g6e" x="24"/></g>
<g fill="#aaaaaa" transform="translate(160,400)"><use href="#g2b" x="0"/><use href="#g37" x="8"/><use href="#g3e" x="16"/></g>
<g fill="#aaaaaa" transform="translate(224,400)"><use href="#g70" x="0"/><use href="#g75" x="8"/><use href="#g73" x="16"/><use href="#g68" x="24"/></g>
<g fill="#aaaaaa" transform="translate(280,400)"><use href="#g72" x="0"/><use href="#g31" x="8"/><use href="#g33" x="16"/></g>
<g fill="#0000aa" transform="translate(32,416)"><use href="#g30" x="0"/><use href="#g78" x="8"/><use href="#g35" x="16"/><use href="#g36" x="24"/><use href="#g35" x="32"/><use href="#g65" x="40"/><use href="#g34" x="48"/><use href="#g62" x="56"/><use href="#g61" x="64"/><use href="#g64" x="72"/></g>
<g fill="#aaaaaa" transform="translate(120,416)"><use href="#g3c" x="0"/></g>
<g fill="#aa5500" transform="translate(128,416)"><use href="#g6d" x="0"/><use href="#g61" x="8"/><use href="#g69" x="16"/><use href="#g6e" x="24"/></g>
<g fill="#aaaaaa" transform="translate(160,416)"><use href="#g2b" x="0"/><use href="#g39" x="8"/><use href="#g3e" x="16"/></g>
<g fill="#aaaaaa" transform="translate(224,416)"><use href="#g70" x="0"/><use href="#g75" x="8"/><use href="#g73" x="16"/><use href="#g68" x="24"/></g>
<g fill="#aaaaaa" transform="translate(280,416)"><use href="#g72" x="0"/><use href="#g31" x="8"/><use href="#g32" x="16"/></g>
<g fill="#0000aa" transform="translate(32,432)"><use href="#g30" x="0"/><use href="#g78" x="8"/><use href="#g35" x="16"/><use href="#g36" x="24"/><use href="#g35" x="32"/><use href="#g65" x="40"/><use href="#g34" x="48"/><use href="#g62" x="56"/><use href="#g61" x="64"/><use href="#g66" x="72"/></g>
<g fill="#aaaaaa" transform="translate(120,432)"><use href="#g3c" x="0"/></g>
<g fill="#aa5500" transform="translate(128,432)"><use href="#g6d" x="0"/><use href="#g61" x="8"/><use href="#g69" x="16"/><use href="#g6e" x="24"/></g>
<g fill="#aaaaaa" transform="translate(160,432)"><use href="#g2b" x="0"/><use href="#g31" x="8"/><use href="#g31" x="16"/><use href="#g3e" x="24"/></g>
<g fill="#aaaaaa" transform="translate(224,432)"><use href="#g70" x="0"/><use href="#g75" x="8"/><use href="#g73" x="16"/><use href="#g68" x="24"/></g>
<g fill="#aaaaaa" transform="translate(280,432)"><use href="#g72" x="0"/><use href="#g62" x="8"/><use href="#g78" x="16"/></g>
<g fill="#0000aa" transform="translate(32,448)"><use href="#g30" x="0"/><use href="#g78" x="8"/><use href="#g35" x="16"/><use href="#g36" x="24"/><use href="#g35" x="32"/><use href="#g65" x="40"/><use href="#g34" x="48"/><use href="#g62" x="56"/><use href="#g62" x="64"/><use href="#g30" x="72"/></g>
<g fill="#aaaaaa" transform="translate(120,448)"><use href="#g3c" x="0"/></g>
<g fill="#aa5500" transform="translate(128,448)"><use href="#g6d" x="0"/><use href="#g61" x="8"/><use href="#g69" x="16"/><use href="#g6e" x="24"/></g>
<g fill="#aaaaaa" transform="translate(160,448)"><use href="#g2b" x="0"/><use href="#g31" x="8"/><use href="#g32" x="16"/><use href="#g3e" x="24"/></g>
<g fill="#aaaaaa" transform="translate(224,448)"><use href="#g73" x="0"/><use href="#g75" x="8"/><use href="#g62" x="16"/></g>
<g fill="#aaaaaa" transform="translate(280,448)"><use href="#g65" x="0"/><use href="#g73" x="8"/><use href="#g70" x="16"/><use href="#g2c" x="24"/><use href="#g30" x="32"/><use href="#g78" x="40"/><use href="#g64" x="48"/><use href="#g38" x="56"/></g>
<g fill="#aaaaaa" transform="translate(24,464)"><use href="#g3e" x="0"/></g>
<g fill="#0000aa" transform="translate(32,464)"><use href="#g30" x="0"/><use href="#g78" x="8"/><use href="#g35" x="16"/><use href="#g36" x="24"/><use href="#g35" x="32"/><use href="#g65" x="40"/><use href="#g34" x="48"/><use href="#g62" x="56"/><use href="#g62" x="64"/><use href="#g36" x="72"/></g>
<g fill="#aaaaaa" transform="translate(120,464)"><use href="#g3c" x="0"/></g>
<g fill="#aa5500" transform="translate(128,464)"><use href="#g6d" x="0"/><use href="#g61" x="8"/><use href="#g69" x="16"/><use href="#g6e" x="24"/></g>
<g fill="#aaaaaa" transform="translate(160,464)"><use href="#g2b" x="0"/><use href="#g31" x="8"/><use href="#g38" x="16"/><use href="#g3e" x="24"/></g>
<g fill="#aaaaaa" transform="translate(224,464)"><use href="#g6d" x="0"/><use href="#g6f" x="8"/><use href="#g76" x="16"/></g>
<g fill="#aaaaaa" transform="translate(280,464)"><use href="#g44" x="0"/><use href="#g57" x="8"/><use href="#g4f" x="16"/><use href="#g52" x="24"/><use href="#g44" x="32"/><use href="#g50" x="48"/><use href="#g54" x="56"/><use href="#g52" x="64"/><use href="#g5b" x="80"/><use href="#g65" x="88"/><use href="#g62" x="96"/><use href="#g70" x="104"/><use href="#g2d" x="112"/><use href="#g30" x="120"/><use href="#g78" x="128"/><use href="#g66" x="136"/><use href="#g34" x="144"/><use href="#g5d" x="152"/><use href="#g2c" x="160"/><use href="#g65" x="168"/><use href="#g64" x="176"/><use href="#g69" x="184"/></g>
<g fill="#000000" transform="translate(472,464)"><use href="#g70" x="0"/><use href="#g2b" x="8"/><use href="#g30" x="16"/><use href="#g78" x="24"/><use href="#g31" x="32"/><use href="#g31" x="40"/><use href="#g30" x="48"/><use href="#g5d" x="56"/></g>
<g fill="#0000aa" transform="translate(32,480)"><use href="#g30" x="0"/><use href="#g78" x="8"/><use href="#g35" x="16"/><use href="#g36" x="24"/><use href="#g35" x="32"/><use href="#g65" x="40"/><use href="#g34" x="48"/><use href="#g62" x="56"/><use href="#g62" x="64"/><use href="#g64" x="72"/></g>
<g fill="#aaaaaa" transform="translate(120,480)"><use href="#g3c" x="0"/></g>
<g fill="#aa5500" transform="translate(128,480)"><use href="#g6d" x="0"/><use href="#g61" x="8"/><use href="#g69" x="16"/><use href="#g6e" x="24"/></g>
<g fill="#aaaaaa" transform="translate(160,480)"><use href="#g2b" x="0"/><use href="#g32" x="8"/><use href="#g35" x="16"/><use href="#g3e" x="24"/></g>
<g fill="#aaaaaa" transform="translate(224,480)"><use href="#g6d" x="0"/><use href="#g6f" x="8"/><use href="#g76" x="16"/></g>
<g fill="#aaaaaa" transform="translate(280,480)"><use href="#g72" x="0"/><use href="#g61" x="8"/><use href="#g78" x="16"/><use href="#g2c" x="24"/><use href="#g72" x="32"/><use href="#g73" x="40"/><use href="#g69" x="48"/></g>
<g fill="#aa5500" transform="translate(536,480)"><use href="#g72" x="0"/><use href="#g6f" x="8"/><use href="#g63" x="16"/><use href="#g6d" x="24"/><use href="#g61" x="32"/><use href="#g73" x="40"/><use href="#g6b" x="48"/><use href="#g40" x="56"/><use href="#g70" x="64"/><use href="#g6c" x="72"/><use href="#g74" x="80"/></g>
<g fill="#aaaaaa" transform="translate(624,480)"><use href="#g3e" x="0"/></g>
<g fill="#0000aa" transform="translate(32,496)"><use href="#g30" x="0"/><use href="#g78" x="8"/><use href="#g35" x="16"/><use href="#g36" x="24"/><use href="#g35" x="32"/><use href="#g65" x="40"/><use href="#g34" x="48"/><use href="#g62" x="56"/><use href="#g63" x="64"/><use href="#g30" x="72"/></g>
<g fill="#aaaaaa" transform="translate(120,496)"><use href="#g3c" x="0"/></g>
<g fill="#aa5500" transform="translate(128,496)"><use href="#g6d" x="0"/><use href="#g61" x="8"/><use href="#g69" x="16"/><use href="#g6e" x="24"/></g>
<g fill="#aaaaaa" transform="translate(160,496)"><use href="#g2b" x="0"/><use href="#g32" x="8"/><use href="#g38" x="16"/><use href="#g3e" x="24"/></g>
<g fill="#aaaaaa" transform="translate(224,496)"><use href="#g6d" x="0"/><use href="#g6f" x="8"/><use href="#g76" x="16"/></g>
<g fill="#aaaaaa" transform="translate(280,496)"><use href="#g44" x="0"/><use href="#g57" x="8"/><use href="#g4f" x="16"/><use href="#g52" x="24"/><use href="#g44" x="32"/><use href="#g50" x="48"/><use href="#g54" x="56"/><use href="#g52" x="64"/><use href="#g5b" x="80"/><use href="#g65" x="88"/><use href="#g62" x="96"/><use href="#g70" x="104"/><use href="#g2d" x="112"/><use href="#g30" x="120"/><use href="#g78" x="128"/><use href="#g66" x="136"/><use href="#g38" x="144"/><use href="#g5d" x="152"/><use href="#g2c" x="160"/><use href="#g65" x="168"/><use href="#g61" x="176"/><use href="#g78" x="184"/></g>
<g fill="#0000aa" transform="translate(32,512)"><use href="#g30" x="0"/><use href="#g78" x="8"/><use href="#g35" x="16"/><use href="#g36" x="24"/><use href="#g35" x="32"/><use href="#g65" x="40"/><use href="#g34" x="48"/><use href="#g62" x="56"/><use href="#g63" x="64"/><use href="#g37" x="72"/></g>
<g fill="#aaaaaa" transform="translate(120,512)"><use href="#g3c" x="0"/></g>
<g fill="#aa5500" transform="translate(128,512)"><use href="#g6d" x="0"/><use href="#g61" x="8"/><use href="#g69" x="16"/><use href="#g6e" x="24"/></g>
<g fill="#aaaaaa" transform="translate(160,512)"><use href="#g2b" x="0"/><use href="#g33" x="8"/><use href="#g35" x="16"/><use href="#g3e" x="24"/></g>
<g fill="#aaaaaa" transform="translate(224,512)"><use href="#g6c" x="0"/><use href="#g65" x="8"/><use href="#g61" x="16"/></g>
<g fill="#aaaaaa" transform="translate(280,512)"><use href="#g72" x="0"/><use href="#g31" x="8"/><use href="#g33" x="16"/><use href="#g64" x="24"/><use href="#g2c" x="32"/><use href="#g5b" x="40"/><use href="#g72" x="48"/><use href="#g62" x="56"/><use href="#g70" x="64"/><use href="#g2d" x="72"/><use href="#g30" x="80"/><use href="#g78" x="88"/><use href="#g64" x="96"/><use href="#g30" x="104"/><use href="#g5d" x="112"/></g>
<g fill="#aaaaaa" transform="translate(464,512)"><use href="#g70" x="0"/><use href="#g2b" x="8"/><use href="#g30" x="16"/><use href="#g78" x="24"/><use href="#g34" x="32"/><use href="#g32" x="40"/><use href="#g38" x="48"/><use href="#g30" x="56"/><use href="#g5d" x="64"/></g>
<g fill="#aaaaaa" transform="translate(600,512)"><use href="#g23" x="0"/></g>
<g fill="#0000aa" transform="translate(616,512)"><use href="#g30" x="0"/><use href="#g78" x="8"/><use href="#g66" x="16"/><use href="#g35" x="24"/><use href="#g65" x="32"/><use href="#g30" x="40"/><use href="#g65" x="48"/><use href="#g31" x="56"/><use href="#g63" x="64"/><use href="#g30" x="72"/></g>
<g fill="#aaaaaa" transform="translate(704,512)"><use href="#g3c" x="0"/></g>
<g fill="#aa5500" transform="translate(712,512)"><use href="#g67" x="0"/><use href="#g70" x="8"/><use href="#g6d" x="16"/><use href="#g5f" x="24"/><use href="#g73" x="32"/><use href="#g61" x="40"/><use href="#g76" x="48"/><use href="#g65" x="56"/><use href="#g64" x="64"/><use href="#g5f" x="72"/><use href="#g73" x="80"/><use href="#g75" x="88"/><use href="#g73" x="96"/><use href="#g70" x="104"/><use href="#g65" x="112"/><use href="#g6e" x="120"/><use href="#g64" x="128"/><use href="#g5f" x="136"/><use href="#g68" x="144"/><use href="#g6f" x="152"/><use href="#g6f" x="160"/><use href="#g6b" x="168"/></g>
<g fill="#aaaaaa" transform="translate(888,512)"><use href="#g3e" x="0"/></g>
<g fill="#0000aa" transform="translate(32,528)"><use href="#g30" x="0"/><use href="#g78" x="8"/><use href="#g35" x="16"/><use href="#g36" x="24"/><use href="#g35" x="32"/><use href="#g65" x="40"/><use href="#g34" x="48"/><use href="#g62" x="56"/><use href="#g63" x="64"/><use href="#g65" x="72"/></g>
<g fill="#aaaaaa" transform="translate(120,528)"><use href="#g3c" x="0"/></g>
<g fill="#aa5500" transform="translate(128,528)"><use href="#g6d" x="0"/><use href="#g61" x="8"/><use href="#g69" x="16"/><use href="#g6e" x="24"/></g>
<g fill="#aaaaaa" transform="translate(160,528)"><use href="#g2b" x="0"/><use href="#g34" x="8"/><use href="#g32" x="16"/><use href="#g3e" x="24"/></g>
<g fill="#aaaaaa" transform="translate(224,528)"><use href="#g6d" x="0"/><use href="#g6f" x="8"/><use href="#g76" x="16"/></g>
<g fill="#aaaaaa" transform="translate(280,528)"><use href="#g72" x="0"/><use href="#g31" x="8"/><use href="#g35" x="16"/><use href="#g64" x="24"/><use href="#g2c" x="32"/><use href="#g72" x="40"/><use href="#g31" x="48"/><use href="#g33" x="56"/><use href="#g64" x="64"/></g>
<g fill="#0000aa" transform="translate(32,544)"><use href="#g30" x="0"/><use href="#g78" x="8"/><use href="#g35" x="16"/><use href="#g36" x="24"/><use href="#g35" x="32"/><use href="#g65" x="40"/><use href="#g34" x="48"/><use href="#g62" x="56"/><use href="#g64" x="64"/><use href="#g31" x="72"/></g>
<g fill="#aaaaaa" transform="translate(120,544)"><use href="#g3c" x="0"/></g>
<g fill="#aa5500" transform="translate(128,544)"><use href="#g6d" x="0"/><use href="#g61" x="8"/><use href="#g69" x="16"/><use href="#g6e" x="24"/></g>
<g fill="#aaaaaa" transform="translate(160,544)"><use href="#g2b" x="0"/><use href="#g34" x="8"/><use href="#g35" x="16"/><use href="#g3e" x="24"/></g>
<g fill="#aaaaaa" transform="translate(224,544)"><use href="#g63" x="0"/><use href="#g6d" x="8"/><use href="#g70" x="16"/></g>
<g fill="#aaaaaa" transform="translate(280,544)"><use href="#g44" x="0"/><use href="#g57" x="8"/><use href="#g4f" x="16"/><use href="#g52" x="24"/><use href="#g44" x="32"/><use href="#g50" x="48"/><use href="#g54" x="56"/><use href="#g52" x="64"/><use href="#g5b" x="80"/><use href="#g72" x="88"/><use href="#g69" x="96"/><use href="#g70" x="104"/><use href="#g2b" x="112"/><use href="#g30" x="120"/><use href="#g78" x="128"/><use href="#g31" x="136"/><use href="#g36" x="144"/><use href="#g36" x="152"/><use href="#g63" x="160"/><use href="#g65" x="168"/><use href="#g38" x="176"/><use href="#g5d" x="184"/><use href="#g2c" x="192"/><use href="#g30" x="200"/><use href="#g78" x="208"/><use href="#g30" x="216"/></g>
<g fill="#aa5500" transform="translate(504,544)"><use href="#g73" x="0"/><use href="#g69" x="8"/><use href="#g67" x="16"/><use href="#g61" x="24"/><use href="#g63" x="32"/><use href="#g74" x="40"/><use href="#g69" x="48"/><use href="#g6f" x="56"/></g>
<g fill="#aaaaaa" transform="translate(568,544)"><use href="#g23" x="0"/></g>
<g fill="#0000aa" transform="translate(584,544)"><use href="#g30" x="0"/><use href="#g78" x="8"/><use href="#g35" x="16"/><use href="#g36" x="24"/><use href="#g37" x="32"/><use href="#g34" x="40"/><use href="#g62" x="48"/><use href="#g38" x="56"/><use href="#g63" x="64"/><use href="#g30" x="72"/></g>
<g fill="#aaaaaa" transform="translate(672,544)"><use href="#g3c" x="0"/></g>
<g fill="#aa5500" transform="translate(680,544)"><use href="#g5f" x="0"/><use href="#g5f" x="8"/><use href="#g61" x="16"/><use href="#g73" x="24"/><use href="#g61" x="32"/><use href="#g6e" x="40"/><use href="#g5f" x="48"/><use href="#g6f" x="56"/><use href="#g70" x="64"/><use href="#g74" x="72"/><use href="#g69" x="80"/><use href="#g6f" x="88"/><use href="#g6e" x="96"/><use href="#g5f" x="104"/><use href="#g64" x="112"/><use href="#g65" x="120"/><use href="#g74" x="128"/><use href="#g65" x="136"/><use href="#g63" x="144"/><use href="#g74" x="152"/><use href="#g5f" x="160"/><use href="#g73" x="168"/><use href="#g74" x="176"/><use href="#g61" x="184"/><use href="#g63" x="192"/><use href="#g6b" x="200"/><use href="#g5f" x="208"/><use href="#g75" x="216"/><use href="#g73" x="224"/><use href="#g65" x="232"/><use href="#g5f" x="240"/><use href="#g61" x="248"/><use href="#g66" x="256"/><use href="#g74" x="264"/><use href="#g65" x="272"/><use href="#g72" x="280"/><use href="#g5f" x="288"/><use href="#g72" x="296"/><use href="#g65" x="304"/><use href="#g74" x="312"/><use href="#g75" x="320"/><use href="#g72" x="328"/><use href="#g6e" x="336"/></g>
<g fill="#aaaaaa" transform="translate(1024,544)"><use href="#g3e" x="0"/></g>
<g fill="#0000aa" transform="translate(32,560)"><use href="#g30" x="0"/><use href="#g78" x="8"/><use href="#g35" x="16"/><use href="#g36" x="24"/><use href="#g35" x="32"/><use href="#g65" x="40"/><use href="#g34" x="48"/><use href="#g62" x="56"/><use href="#g64" x="64"/><use href="#g38" x="72"/></g>
<g fill="#aaaaaa" transform="translate(120,560)"><use href="#g3c" x="0"/></g>
<g fill="#aa5500" transform="translate(128,560)"><use href="#g6d" x="0"/><use href="#g61" x="8"/><use href="#g69" x="16"/><use href="#g6e" x="24"/></g>
<g fill="#aaaaaa" transform="translate(160,560)"><use href="#g2b" x="0"/><use href="#g35" x="8"/><use href="#g32" x="16"/><use href="#g3e" x="24"/></g>
<g fill="#aaaaaa" transform="translate(224,560)"><use href="#g6a" x="0"/><use href="#g65" x="8"/></g>
<g fill="#0000aa" transform="translate(280,560)"><use href="#g30" x="0"/><use href="#g78" x="8"/><use href="#g35" x="16"/><use href="#g36" x="24"/><use href="#g35" x="32"/><use href="#g65" x="40"/><use href="#g34" x="48"/><use href="#g62" x="56"/><use href="#g65" x="64"/><use href="#g62" x="72"/></g>
<g fill="#aaaaaa" transform="translate(368,560)"><use href="#g3c" x="0"/></g>
<g fill="#aa5500" transform="translate(376,560)"><use href="#g6d" x="0"/><use href="#g61" x="8"/><use href="#g69" x="16"/><use href="#g6e" x="24"/></g>
<g fill="#aaaaaa" transform="translate(408,560)"><use href="#g2b" x="0"/><use href="#g37" x="8"/><use href="#g31" x="16"/><use href="#g3e" x="24"/></g>
<g fill="#0000aa" transform="translate(32,576)"><use href="#g30" x="0"/><use href="#g78" x="8"/><use href="#g35" x="16"/><use href="#g36" x="24"/><use href="#g35" x="32"/><use href="#g65" x="40"/><use href="#g34" x="48"/><use href="#g62" x="56"/><use href="#g64" x="64"/><use href="#g61" x="72"/></g>
<g fill="#aaaaaa" transform="translate(120,576)"><use href="#g3c" x="0"/></g>
<g fill="#aa5500" transform="translate(128,576)"><use href="#g6d" x="0"/><use href="#g61" x="8"/><use href="#g69" x="16"/><use href="#g6e" x="24"/></g>
<g fill="#aaaaaa" transform="translate(160,576)"><use href="#g2b" x="0"/><use href="#g35" x="8"/><use href="#g34" x="16"/><use href="#g3e" x="24"/></g>
<g fill="#aaaaaa" transform="translate(224,576)"><use href="#g6d" x="0"/><use href="#g6f" x="8"/><use href="#g76" x="16"/></g>
<g fill="#aaaaaa" transform="translate(280,576)"><use href="#g65" x="0"/><use href="#g64" x="8"/><use href="#g69" x="16"/><use href="#g2c" x="24"/><use href="#g30" x="32"/><use href="#g78" x="40"/><use href="#g61" x="48"/><use href="#g30" x="56"/></g>
<g fill="#0000aa" transform="translate(32,592)"><use href="#g30" x="0"/><use href="#g78" x="8"/><use href="#g35" x="16"/><use href="#g36" x="24"/><use href="#g35" x="32"/><use href="#g65" x="40"/><use href="#g34" x="48"/><use href="#g62" x="56"/><use href="#g64" x="64"/><use href="#g66" x="72"/></g>
<g fill="#aaaaaa" transform="translate(120,592)"><use href="#g3c" x="0"/></g>
<g fill="#aa5500" transform="translate(128,592)"><use href="#g6d" x="0"/><use href="#g61" x="8"/><use href="#g69" x="16"/><use href="#g6e" x="24"/></g>
<g fill="#aaaaaa" transform="translate(160,592)"><use href="#g2b" x="0"/><use href="#g35" x="8"/><use href="#g39" x="16"/><use href="#g3e" x="24"/></g>
<g fill="#aaaaaa" transform="translate(224,592)"><use href="#g63" x="0"/><use href="#g61" x="8"/><use href="#g6c" x="16"/><use href="#g6c" x="24"/></g>
<g fill="#0000aa" transform="translate(280,592)"><use href="#g30" x="0"/><use href="#g78" x="8"/><use href="#g35" x="16"/><use href="#g36" x="24"/><use href="#g35" x="32"/><use href="#g63" x="40"/><use href="#g39" x="48"/><use href="#g39" x="56"/><use href="#g32" x="64"/><use href="#g30" x="72"/></g>
<g fill="#aaaaaa" transform="translate(368,592)"><use href="#g3c" x="0"/></g>
<g fill="#aa5500" transform="translate(376,592)"><use href="#g5f" x="0"/><use href="#g5f" x="8"/><use href="#g61" x="16"/><use href="#g73" x="24"/><use href="#g61" x="32"/><use href="#g6e" x="40"/><use href="#g5f" x="48"/><use href="#g73" x="56"/><use href="#g74" x="64"/><use href="#g61" x="72"/><use href="#g63" x="80"/><use href="#g6b" x="88"/><use href="#g5f" x="96"/><use href="#g6d" x="104"/><use href="#g61" x="112"/><use href="#g6c" x="120"/><use href="#g6c" x="128"/><use href="#g6f" x="136"/><use href="#g63" x="144"/><use href="#g5f" x="152"/><use href="#g32" x="160"/><use href="#g40" x="168"/><use href="#g70" x="176"/><use href="#g6c" x="184"/><use href="#g74" x="192"/></g>
<g fill="#aaaaaa" transform="translate(576,592)"><use href="#g3e" x="0"/></g>
<g fill="#0000aa" transform="translate(32,608)"><use href="#g30" x="0"/><use href="#g78" x="8"/><use href="#g35" x="16"/><use href="#g36" x="24"/><use href="#g35" x="32"/><use href="#g65" x="40"/><use href="#g34" x="48"/><use href="#g62" x="56"/><use href="#g65" x="64"/><use href="#g34" x="72"/></g>
<g fill="#aaaaaa" transform="translate(120,608)"><use href="#g3c" x="0"/></g>
<g fill="#aa5500" transform="translate(128,608)"><use href="#g6d" x="0"/><use href="#g61" x="8"/><use href="#g69" x="16"/><use href="#g6e" x="24"/></g>
<g fill="#aaaaaa" transform="translate(160,608)"><use href="#g2b" x="0"/><use href="#g36" x="8"/><use href="#g34" x="16"/><use href="#g3e" x="24"/></g>
<g fill="#aaaaaa" transform="translate(224,608)"><use href="#g74" x="0"/><use href="#g65" x="8"/><use href="#g73" x="16"/><use href="#g74" x="24"/></g>
<g fill="#aaaaaa" transform="translate(280,608)"><use href="#g65" x="0"/><use href="#g61" x="8"/><use href="#g78" x="16"/><use href="#g2c" x="24"/><use href="#g65" x="32"/><use href="#g61" x="40"/><use href="#g78" x="48"/></g>
<g fill="#0000aa" transform="translate(464,608)"><use href="#g32" x="0"/><use href="#g33" x="8"/><use href="#g30" x="16"/></g>
<g fill="#aaaaaa" transform="translate(496,608)"><use href="#g3c" x="0"/></g>
<g fill="#aa5500" transform="translate(504,608)"><use href="#g6b" x="0"/><use href="#g69" x="8"/><use href="#g6c" x="16"/><use href="#g6c" x="24"/><use href="#g40" x="32"/><use href="#g70" x="40"/><use href="#g6c" x="48"/><use href="#g74" x="56"/></g>
<g fill="#aaaaaa" transform="translate(568,608)"><use href="#g3e" x="0"/></g>
<g fill="#0000aa" transform="translate(32,624)"><use href="#g30" x="0"/><use href="#g78" x="8"/><use href="#g35" x="16"/><use href="#g36" x="24"/><use href="#g35" x="32"/><use href="#g65" x="40"/><use href="#g34" x="48"/><use href="#g62" x="56"/><use href="#g65" x="64"/><use href="#g36" x="72"/></g>
<g fill="#aaaaaa" transform="translate(120,624)"><use href="#g3c" x="0"/></g>
<g fill="#aa5500" transform="translate(128,624)"><use href="#g6d" x="0"/><use href="#g61" x="8"/><use href="#g69" x="16"/><use href="#g6e" x="24"/></g>
<g fill="#aaaaaa" transform="translate(160,624)"><use href="#g2b" x="0"/><use href="#g36" x="8"/><use href="#g36" x="16"/><use href="#g3e" x="24"/></g>
<g fill="#aaaaaa" transform="translate(224,624)"><use href="#g6a" x="0"/><use href="#g65" x="8"/></g>
<g fill="#0000aa" transform="translate(280,624)"><use href="#g30" x="0"/><use href="#g78" x="8"/><use href="#g35" x="16"/><use href="#g36" x="24"/><use href="#g35" x="32"/><use href="#g65" x="40"/><use href="#g34" x="48"/><use href="#g62" x="56"/><use href="#g65" x="64"/><use href="#g62" x="72"/></g>
<g fill="#aaaaaa" transform="translate(368,624)"><use href="#g3c" x="0"/></g>
<g fill="#aa5500" transform="translate(376,624)"><use href="#g6d" x="0"/><use href="#g61" x="8"/><use href="#g69" x="16"/><use href="#g6e" x="24"/></g>
<g fill="#aaaaaa" transform="translate(408,624)"><use href="#g2b" x="0"/><use href="#g37" x="8"/><use href="#g31" x="16"/><use href="#g3e" x="24"/></g>
<g fill="#0000aa" transform="translate(32,640)"><use href="#g30" x="0"/><use href="#g78" x="8"/><use href="#g35" x="16"/><use href="#g36" x="24"/><use href="#g35" x="32"/><use href="#g65" x="40"/><use href="#g34" x="48"/><use href="#g62" x="56"/><use href="#g65" x="64"/><use href="#g38" x="72"/></g>
<g fill="#aaaaaa" transform="translate(120,640)"><use href="#g3c" x="0"/></g>
<g fill="#aa5500" transform="translate(128,640)"><use href="#g6d" x="0"/><use href="#g61" x="8"/><use href="#g69" x="16"/><use href="#g6e" x="24"/></g>
<g fill="#aaaaaa" transform="translate(160,640)"><use href="#g2b" x="0"/><use href="#g36" x="8"/><use href="#g38" x="16"/><use href="#g3e" x="24"/></g>
<g fill="#aaaaaa" transform="translate(224,640)"><use href="#g6d" x="0"/><use href="#g6f" x="8"/><use href="#g76" x="16"/></g>
<g fill="#aaaaaa" transform="translate(280,640)"><use href="#g72" x="0"/><use href="#g31" x="8"/><use href="#g33" x="16"/><use href="#g64" x="24"/><use href="#g2c" x="32"/><use href="#g65" x="40"/><use href="#g61" x="48"/><use href="#g78" x="56"/></g>
<g fill="#000000" transform="translate(0,656)"><use href="#g6d" x="0"/><use href="#g75" x="8"/><use href="#g6c" x="16"/><use href="#g74" x="24"/><use href="#g69" x="32"/><use href="#g2d" x="40"/><use href="#g74" x="48"/><use href="#g68" x="56"/><use href="#g72" x="64"/><use href="#g65" x="72"/><use href="#g54" x="88"/><use href="#g68" x="96"/><use href="#g72" x="104"/><use href="#g65" x="112"/><use href="#g61" x="120"/><use href="#g64" x="128"/><use href="#g30" x="144"/><use href="#g78" x="152"/><use href="#g66" x="160"/><use href="#g36" x="168"/><use href="#g66" x="176"/><use href="#g66" x="184"/><use href="#g33" x="192"/><use href="#g37" x="200"/><use href="#g34" x="208"/><use href="#g30" x="216"/><use href="#g28" x="232"/><use href="#g49" x="248"/><use href="#g6e" x="256"/><use href="#g3a" x="264"/><use href="#g67" x="280"/><use href="#g70" x="288"/><use href="#g6d" x="296"/><use href="#g5f" x="304"/><use href="#g73" x="312"/><use href="#g75" x="320"/><use href="#g73" x="328"/><use href="#g70" x="336"/><use href="#g65" x="344"/><use href="#g6e" x="352"/><use href="#g64" x="360"/><use href="#g5f" x="368"/><use href="#g68" x="376"/><use href="#g6f" x="384"/><use href="#g6f" x="392"/><use href="#g6b" x="400"/><use href="#g4c" x="1112"/><use href="#g31" x="1120"/><use href="#g36" x="1128"/><use href="#g37" x="1136"/><use href="#g50" x="1160"/><use href="#g43" x="1168"/><use href="#g3a" x="1176"/><use href="#g30" x="1192"/><use href="#g78" x="1200"/><use href="#g66" x="1208"/><use href="#g35" x="1216"/><use href="#g65" x="1224"/><use href="#g30" x="1232"/><use href="#g39" x="1240"/><use href="#g66" x="1248"/><use href="#g32" x="1256"/><use href="#g62" x="1264"/></g>
<g fill="#aaaaaa" transform="translate(0,672)"><use href="#g53" x="0"/><use href="#g74" x="8"/><use href="#g61" x="16"/><use href="#g72" x="24"/><use href="#g74" x="32"/><use href="#g69" x="40"/><use href="#g6e" x="48"/><use href="#g67" x="56"/><use href="#g70" x="72"/><use href="#g72" x="80"/></g>
<g fill="#000000" transform="translate(88,672)"><use href="#g4e" x="0"/><use href="#g6f" x="8"/><use href="#g70" x="24"/><use href="#g72" x="32"/><use href="#g6f" x="40"/><use href="#g63" x="48"/><use href="#g65" x="56"/><use href="#g73" x="64"/><use href="#g73" x="72"/><use href="#g49" x="88"/><use href="#g6e" x="96"/><use href="#g3a" x="104"/></g>
<g fill="#aaaaaa" transform="translate(408,672)"><use href="#g74" x="0"/><use href="#g79" x="8"/><use href="#g32" x="16"/></g>
<g fill="#000000" transform="translate(1112,672)"><use href="#g4c" x="64"/><use href="#g3f" x="72"/><use href="#g3f" x="80"/><use href="#g50" x="112"/><use href="#g43" x="120"/><use href="#g3a" x="128"/><use href="#g3f" x="144"/><use href="#g3f" x="152"/></g>
<g fill="#0000aa" transform="translate(0,688)"><use href="#g30" x="0"/><use href="#g78" x="8"/><use href="#g66" x="16"/><use href="#g37" x="24"/><use href="#g39" x="32"/><use href="#g63" x="40"/><use href="#g35" x="48"/><use href="#g62" x="56"/><use href="#g63" x="64"/><use href="#g31" x="72"/></g>
<g fill="#aaaaaa" transform="translate(80,688)"><use href="#g69" x="8"/><use href="#g6e" x="16"/></g>
<g fill="#aa5500" transform="translate(112,688)"><use href="#g77" x="0"/><use href="#g61" x="8"/><use href="#g64" x="16"/><use href="#g64" x="24"/><use href="#g5f" x="32"/><use href="#g77" x="40"/><use href="#g63" x="48"/><use href="#g68" x="56"/><use href="#g6e" x="64"/><use href="#g73" x="72"/><use href="#g74" x="80"/><use href="#g72" x="88"/></g>
<g fill="#aaaaaa" transform="translate(208,688)"><use href="#g28" x="8"/></g>
<g fill="#00aaaa" transform="translate(224,688)"><use href="#g77" x="0"/><use href="#g69" x="8"/><use href="#g6e" x="16"/></g>
<g fill="#aaaaaa" transform="translate(248,688)"><use href="#g3d" x="0"/><use href="#g3c" x="8"/><use href="#g6f" x="16"/><use href="#g70" x="24"/><use href="#g74" x="32"/><use href="#g69" x="40"/><use href="#g6d" x="48"/><use href="#g69" x="56"/><use href="#g7a" x="64"/><use href="#g65" x="72"/><use href="#g64" x="80"/><use href="#g6f" x="96"/><use href="#g75" x="104"/><use href="#g74" x="112"/><use href="#g3e" x="120"/><use href="#g2c" x="128"/></g>
<g fill="#00aaaa" transform="translate(392,688)"><use href="#g61" x="0"/><use href="#g73" x="8"/><use href="#g74" x="16"/><use href="#g72" x="24"/></g>
<g fill="#aaaaaa" transform="translate(424,688)"><use href="#g3d" x="0"/><use href="#g3c" x="8"/><use href="#g6f" x="16"/><use href="#g70" x="24"/><use href="#g74" x="32"/><use href="#g69" x="40"/><use href="#g6d" x="48"/><use href="#g69" x="56"/><use href="#g7a" x="64"/><use href="#g65" x="72"/><use href="#g64" x="80"/><use href="#g6f" x="96"/><use href="#g75" x="104"/><use href="#g74" x="112"/><use href="#g3e" x="120"/><use href="#g2c" x="128"/></g>
<g fill="#00aaaa" transform="translate(568,688)"><use href="#g6e" x="0"/></g>
<g fill="#aaaaaa" transform="translate(576,688)"><use href="#g3d" x="0"/><use href="#g3c" x="8"/><use href="#g6f" x="16"/><use href="#g70" x="24"/><use href="#g74" x="32"/><use href="#g69" x="40"/><use href="#g6d" x="48"/><use href="#g69" x="56"/><use href="#g7a" x="64"/><use href="#g65" x="72"/><use href="#g64" x="80"/><use href="#g6f" x="96"/><use href="#g75" x="104"/><use href="#g74" x="112"/><use href="#g3e" x="120"/><use href="#g29" x="128"/><use href="#g61" x="144"/><use href="#g74" x="152"/></g>
<g fill="#00aa00" transform="translate(744,688)"><use href="#g2e" x="0"/><use href="#g2e" x="8"/><use href="#g2f" x="16"/><use href="#g2e" x="24"/><use href="#g2e" x="32"/><use href="#g2f" x="40"/><use href="#g6e" x="48"/><use href="#g63" x="56"/><use href="#g75" x="64"/><use href="#g72" x="72"/><use href="#g73" x="80"/><use href="#g65" x="88"/><use href="#g73" x="96"/><use href="#g2f" x="104"/><use href="#g62" x="112"/><use href="#g61" x="120"/><use href="#g73" x="128"/><use href="#g65" x="136"/><use href="#g2f" x="144"/><use href="#g6c" x="152"/><use href="#g69" x="160"/><use href="#g62" x="168"/><use href="#g5f" x="176"/><use href="#g61" x="184"/><use href="#g64" x="192"/><use href="#g64" x="200"/><use href="#g73" x="208"/><use href="#g74" x="216"/><use href="#g72" x="224"/><use href="#g2e" x="232"/><use href="#g63" x="240"/></g>
<g fill="#aaaaaa" transform="translate(992,688)"><use href="#g3a" x="0"/><use href="#g31" x="8"/><use href="#g39" x="16"/><use href="#g30" x="24"/></g>
<g fill="#aaaaaa" transform="translate(0,704)"><use href="#g28" x="0"/><use href="#g67" x="8"/><use href="#g64" x="16"/><use href="#g62" x="24"/><use href="#g29" x="32"/><use href="#g63" x="48"/><use href="#g6f" x="56"/><use href="#g6e" x="64"/><use href="#g74" x="72"/></g>
<g fill="#aaaaaa" transform="translate(0,720)"><use href="#g43" x="0"/><use href="#g6f" x="8"/><use href="#g6e" x="16"/><use href="#g74" x="24"/><use href="#g69" x="32"/><use href="#g6e" x="40"/><use href="#g75" x="48"/><use href="#g69" x="56"/><use href="#g6e" x="64"/><use href="#g67" x="72"/><use href="#g2e" x="80"/></g>
<g fill="#aaaaaa" transform="translate(0,752)"><use href="#g42" x="0"/><use href="#g72" x="8"/><use href="#g65" x="16"/><use href="#g61" x="24"/><use href="#g6b" x="32"/><use href="#g70" x="40"/><use href="#g6f" x="48"/><use href="#g69" x="56"/><use href="#g6e" x="64"/><use href="#g74" x="72"/><use href="#g31" x="88"/><use href="#g2c" x="96"/></g>
<g fill="#aa5500" transform="translate(112,752)"><use href="#g67" x="0"/><use href="#g70" x="8"/><use href="#g6d" x="16"/><use href="#g5f" x="24"/><use href="#g73" x="32"/><use href="#g75" x="40"/><use href="#g73" x="48"/><use href="#g70" x="56"/><use href="#g65" x="64"/><use href="#g6e" x="72"/><use href="#g64" x="80"/><use href="#g5f" x="88"/><use href="#g68" x="96"/><use href="#g6f" x="104"/><use href="#g6f" x="112"/><use href="#g6b" x="120"/></g>
<g fill="#aaaaaa" transform="translate(240,752)"><use href="#g28" x="8"/></g>
<g fill="#00aaaa" transform="translate(256,752)"><use href="#g73" x="0"/><use href="#g69" x="8"/><use href="#g67" x="16"/><use href="#g6e" x="24"/><use href="#g75" x="32"/><use href="#g6d" x="40"/></g>
<g fill="#aaaaaa" transform="translate(304,752)"><use href="#g3d" x="0"/><use href="#g32" x="8"/><use href="#g30" x="16"/><use href="#g29" x="24"/><use href="#g61" x="40"/><use href="#g74" x="48"/></g>
<g fill="#00aa00" transform="translate(368,752)"><use href="#g6c" x="0"/><use href="#g69" x="8"/><use href="#g62" x="16"/><use href="#g2f" x="24"/><use href="#g6c" x="32"/><use href="#g69" x="40"/><use href="#g62" x="48"/><use href="#g6c" x="56"/><use href="#g6f" x="64"/><use href="#g77" x="72"/><use href="#g2e" x="80"/><use href="#g63" x="88"/></g>
<g fill="#aaaaaa" transform="translate(464,752)"><use href="#g3a" x="0"/><use href="#g31" x="8"/><use href="#g34" x="16"/><use href="#g37" x="24"/></g>
<g fill="#aaaaaa" transform="translate(0,768)"><use href="#g77" x="0"/><use href="#g61" x="8"/><use href="#g72" x="16"/><use href="#g6e" x="24"/><use href="#g69" x="32"/><use href="#g6e" x="40"/><use href="#g67" x="48"/><use href="#g3a" x="56"/><use href="#g53" x="72"/><use href="#g6f" x="80"/><use href="#g75" x="88"/><use href="#g72" x="96"/><use href="#g63" x="104"/><use href="#g65" x="112"/><use href="#g66" x="128"/><use href="#g69" x="136"/><use href="#g6c" x="144"/><use href="#g65" x="152"/><use href="#g69" x="168"/><use href="#g73" x="176"/><use href="#g6d" x="192"/><use href="#g6f" x="200"/><use href="#g72" x="208"/><use href="#g65" x="216"/><use href="#g72" x="232"/><use href="#g65" x="240"/><use href="#g63" x="248"/><use href="#g65" x="256"/><use href="#g6e" x="264"/><use href="#g74" x="272"/><use href="#g74" x="288"/><use href="#g68" x="296"/><use href="#g61" x="304"/><use href="#g6e" x="312"/><use href="#g65" x="328"/><use href="#g78" x="336"/><use href="#g65" x="344"/><use href="#g63" x="352"/><use href="#g75" x="360"/><use href="#g74" x="368"/><use href="#g61" x="376"/><use href="#g62" x="384"/><use href="#g6c" x="392"/><use href="#g65" x="400"/><use href="#g2e" x="408"/></g>
<g fill="#aaaaaa" transform="translate(0,784)"><use href="#g28" x="0"/><use href="#g67" x="8"/><use href="#g64" x="16"/><use href="#g62" x="24"/><use href="#g29" x="32"/><use href="#g62" x="48"/><use href="#g72" x="56"/><use href="#g65" x="64"/><use href="#g61" x="72"/><use href="#g6b" x="80"/><use href="#g31" x="96"/><use href="#g36" x="104"/><use href="#g34" x="112"/></g>
<g fill="#aaaaaa" transform="translate(0,800)"><use href="#g42" x="0"/><use href="#g72" x="8"/><use href="#g65" x="16"/><use href="#g61" x="24"/><use href="#g6b" x="32"/><use href="#g70" x="40"/><use href="#g6f" x="48"/><use href="#g69" x="56"/><use href="#g6e" x="64"/><use href="#g74" x="72"/><use href="#g32" x="88"/><use href="#g61" x="104"/><use href="#g74" x="112"/></g>
<g fill="#0000aa" transform="translate(128,800)"><use href="#g30" x="0"/><use href="#g78" x="8"/><use href="#g66" x="16"/><use href="#g35" x="24"/><use href="#g65" x="32"/><use href="#g30" x="40"/><use href="#g39" x="48"/><use href="#g66" x="56"/><use href="#g31" x="64"/><use href="#g61" x="72"/></g>
<g fill="#aaaaaa" transform="translate(208,800)"><use href="#g3a" x="0"/><use href="#g66" x="16"/><use href="#g69" x="24"/><use href="#g6c" x="32"/><use href="#g65" x="40"/></g>
<g fill="#00aa00" transform="translate(264,800)"><use href="#g6c" x="0"/><use href="#g69" x="8"/><use href="#g62" x="16"/><use href="#g2f" x="24"/><use href="#g6c" x="32"/><use href="#g69" x="40"/><use href="#g62" x="48"/><use href="#g6c" x="56"/><use href="#g6f" x="64"/><use href="#g77" x="72"/><use href="#g2e" x="80"/><use href="#g63" x="88"/></g>
<g fill="#aaaaaa" transform="translate(360,800)"><use href="#g2c" x="0"/><use href="#g6c" x="16"/><use href="#g69" x="24"/><use href="#g6e" x="32"/><use href="#g65" x="40"/><use href="#g31" x="56"/><use href="#g36" x="64"/><use href="#g34" x="72"/><use href="#g2e" x="80"/></g>
<g fill="#aaaaaa" transform="translate(0,816)"><use href="#g28" x="0"/><use href="#g67" x="8"/><use href="#g64" x="16"/><use href="#g62" x="24"/><use href="#g29" x="32"/><use href="#g63" x="48"/><use href="#g6f" x="56"/><use href="#g6e" x="64"/><use href="#g74" x="72"/></g>
<g fill="#aaaaaa" transform="translate(0,832)"><use href="#g43" x="0"/><use href="#g6f" x="8"/><use href="#g6e" x="16"/><use href="#g74" x="24"/><use href="#g69" x="32"/><use href="#g6e" x="40"/><use href="#g75" x="48"/><use href="#g69" x="56"/><use href="#g6e" x="64"/><use href="#g67" x="72"/><use href="#g2e" x="80"/></g>
<g fill="#aaaaaa" transform="translate(0,864)"><use href="#g42" x="0"/><use href="#g72" x="8"/><use href="#g65" x="16"/><use href="#g61" x="24"/><use href="#g6b" x="32"/><use href="#g70" x="40"/><use href="#g6f" x="48"/><use href="#g69" x="56"/><use href="#g6e" x="64"/><use href="#g74" x="72"/><use href="#g32" x="88"/><use href="#g2c" x="96"/></g>
<g fill="#aa5500" transform="translate(112,864)"><use href="#g67" x="0"/><use href="#g70" x="8"/><use href="#g6d" x="16"/><use href="#g5f" x="24"/><use href="#g73" x="32"/><use href="#g75" x="40"/><use href="#g73" x="48"/><use href="#g70" x="56"/><use href="#g65" x="64"/><use href="#g6e" x="72"/><use href="#g64" x="80"/><use href="#g5f" x="88"/><use href="#g68" x="96"/><use href="#g6f" x="104"/><use href="#g6f" x="112"/><use href="#g6b" x="120"/></g>
<g fill="#aaaaaa" transform="translate(240,864)"><use href="#g28" x="8"/></g>
<g fill="#00aaaa" transform="translate(256,864)"><use href="#g73" x="0"/><use href="#g69" x="8"/><use href="#g67" x="16"/><use href="#g6e" x="24"/><use href="#g75" x="32"/><use href="#g6d" x="40"/></g>
<g fill="#aaaaaa" transform="translate(304,864)"><use href="#g3d" x="0"/><use href="#g3c" x="8"/><use href="#g6f" x="16"/><use href="#g70" x="24"/><use href="#g74" x="32"/><use href="#g69" x="40"/><use href="#g6d" x="48"/><use href="#g69" x="56"/><use href="#g7a" x="64"/><use href="#g65" x="72"/><use href="#g64" x="80"/><use href="#g6f" x="96"/><use href="#g75" x="104"/><use href="#g74" x="112"/><use href="#g3e" x="120"/><use href="#g29" x="128"/><use href="#g61" x="144"/><use href="#g74" x="152"/></g>
<g fill="#00aa00" transform="translate(472,864)"><use href="#g6c" x="0"/><use href="#g69" x="8"/><use href="#g62" x="16"/><use href="#g2f" x="24"/><use href="#g6c" x="32"/><use href="#g69" x="40"/><use href="#g62" x="48"/><use href="#g6c" x="56"/><use href="#g6f" x="64"/><use href="#g77" x="72"/><use href="#g2e" x="80"/><use href="#g63" x="88"/></g>
<g fill="#aaaaaa" transform="translate(568,864)"><use href="#g3a" x="0"/><use href="#g31" x="8"/><use href="#g36" x="16"/><use href="#g34" x="24"/></g>
<g fill="#aaaaaa" transform="translate(0,880)"><use href="#g28" x="0"/><use href="#g67" x="8"/><use href="#g64" x="16"/><use href="#g62" x="24"/><use href="#g29" x="32"/><use href="#g6e" x="48"/></g>
<g fill="#aaaaaa" transform="translate(0,896)"><use href="#g28" x="0"/><use href="#g67" x="8"/><use href="#g64" x="16"/><use href="#g62" x="24"/><use href="#g29" x="32"/><use href="#g6a" x="48"/><use href="#g75" x="56"/><use href="#g6d" x="64"/><use href="#g70" x="72"/><use href="#g31" x="88"/><use href="#g37" x="96"/><use href="#g31" x="104"/></g>
<g fill="#aaaaaa" transform="translate(0,912)"><use href="#g43" x="0"/><use href="#g6f" x="8"/><use href="#g6e" x="16"/><use href="#g74" x="24"/><use href="#g69" x="32"/><use href="#g6e" x="40"/><use href="#g75" x="48"/><use href="#g69" x="56"/><use href="#g6e" x="64"/><use href="#g67" x="72"/><use href="#g61" x="88"/><use href="#g74" x="96"/><use href="#g30" x="112"/><use href="#g78" x="120"/><use href="#g66" x="128"/><use href="#g35" x="136"/><use href="#g65" x="144"/><use href="#g30" x="152"/><use href="#g39" x="160"/><use href="#g66" x="168"/><use href="#g35" x="176"/><use href="#g62" x="184"/><use href="#g2e" x="192"/></g>
<g fill="#aaaaaa" transform="translate(0,928)"><use href="#g71" x="0"/></g>
<g fill="#aaaaaa" transform="translate(0,944)"><use href="#g77" x="0"/><use href="#g61" x="8"/><use href="#g72" x="16"/><use href="#g6e" x="24"/><use href="#g69" x="32"/><use href="#g6e" x="40"/><use href="#g67" x="48"/><use href="#g3a" x="56"/><use href="#g54" x="72"/><use href="#g65" x="80"/><use href="#g6d" x="88"/><use href="#g70" x="96"/><use href="#g6f" x="104"/><use href="#g72" x="112"/><use href="#g61" x="120"/><use href="#g72" x="128"/><use href="#g69" x="136"/><use href="#g6c" x="144"/><use href="#g79" x="152"/><use href="#g64" x="168"/><use href="#g69" x="176"/><use href="#g73" x="184"/><use href="#g61" x="192"/><use href="#g62" x="200"/><use href="#g6c" x="208"/><use href="#g69" x="216"/><use href="#g6e" x="224"/><use href="#g67" x="232"/><use href="#g62" x="248"/><use href="#g72" x="256"/><use href="#g65" x="264"/><use href="#g61" x="272"/><use href="#g6b" x="280"/><use href="#g70" x="288"/><use href="#g6f" x="296"/><use href="#g69" x="304"/><use href="#g6e" x="312"/><use href="#g74" x="320"/><use href="#g73" x="328"/><use href="#g66" x="344"/><use href="#g6f" x="352"/><use href="#g72" x="360"/><use href="#g75" x="376"/><use href="#g6e" x="384"/><use href="#g6c" x="392"/><use href="#g6f" x="400"/><use href="#g61" x="408"/><use href="#g64" x="416"/><use href="#g65" x="424"/><use href="#g64" x="432"/><use href="#g73" x="448"/><use href="#g68" x="456"/><use href="#g61" x="464"/><use href="#g72" x="472"/><use href="#g65" x="480"/><use href="#g64" x="488"/><use href="#g6c" x="504"/><use href="#g69" x="512"/><use href="#g62" x="520"/><use href="#g72" x="528"/><use href="#g61" x="536"/><use href="#g72" x="544"/><use href="#g79" x="552"/><use href="#g22" x="568"/><use href="#g2f" x="576"/><use href="#g6c" x="584"/><use href="#g69" x="592"/><use href="#g62" x="600"/><use href="#g2f" x="608"/><use href="#g78" x="616"/><use href="#g38" x="624"/><use href="#g36" x="632"/><use href="#g5f" x="640"/><use href="#g36" x="648"/><use href="#g34" x="656"/><use href="#g2d" x="664"/><use href="#g6c" x="672"/><use href="#g69" x="680"/><use href="#g6e" x="688"/><use href="#g75" x="696"/><use href="#g78" x="704"/><use href="#g2d" x="712"/><use href="#g67" x="720"/><use href="#g6e" x="728"/><use href="#g75" x="736"/><use href="#g78" x="744"/><use href="#g33" x="752"/><use href="#g32" x="760"/><use href="#g2f" x="768"/><use href="#g6c" x="776"/><use href="#g69" x="784"/><use href="#g62" x="792"/><use href="#g67" x="800"/><use href="#g70" x="808"/><use href="#g6d" x="816"/><use href="#g2e" x="824"/><use href="#g73" x="832"/><use href="#g6f" x="840"/><use href="#g2e" x="848"/><use href="#g32" x="856"/><use href="#g22" x="864"/></g>
<g fill="#aaaaaa" transform="translate(0,960)"><use href="#g5b" x="0"/><use href="#g49" x="8"/><use href="#g6e" x="16"/><use href="#g66" x="24"/><use href="#g65" x="32"/><use href="#g72" x="40"/><use href="#g69" x="48"/><use href="#g6f" x="56"/><use href="#g72" x="64"/><use href="#g31" x="80"/><use href="#g28" x="96"/><use href="#g70" x="104"/><use href="#g72" x="112"/><use href="#g6f" x="120"/><use href="#g63" x="128"/><use href="#g65" x="136"/><use href="#g73" x="144"/><use href="#g73" x="152"/><use href="#g31" x="168"/><use href="#g39" x="176"/><use href="#g37" x="184"/><use href="#g32" x="192"/><use href="#g31" x="200"/><use href="#g29" x="208"/><use href="#g65" x="224"/><use href="#g78" x="232"/><use href="#g69" x="240"/><use href="#g74" x="248"/><use href="#g65" x="256"/><use href="#g64" x="264"/><use href="#g6e" x="280"/><use href="#g6f" x="288"/><use href="#g72" x="296"/><use href="#g6d" x="304"/><use href="#g61" x="312"/><use href="#g6c" x="320"/><use href="#g6c" x="328"/><use href="#g79" x="336"/><use href="#g5d" x="344"/></g>
<g fill="#aaaaaa" transform="translate(0,976)"><use href="#g54" x="0"/><use href="#g68" x="8"/><use href="#g65" x="16"/><use href="#g70" x="32"/><use href="#g72" x="40"/><use href="#g6f" x="48"/><use href="#g67" x="56"/><use href="#g72" x="64"/><use href="#g61" x="72"/><use href="#g6d" x="80"/><use href="#g69" x="96"/><use href="#g73" x="104"/><use href="#g6e" x="120"/><use href="#g6f" x="128"/><use href="#g74" x="136"/><use href="#g62" x="152"/><use href="#g65" x="160"/><use href="#g69" x="168"/><use href="#g6e" x="176"/><use href="#g67" x="184"/><use href="#g72" x="200"/><use href="#g75" x="208"/><use href="#g6e" x="216"/><use href="#g2e" x="224"/></g>
<g fill="#aaaaaa" transform="translate(0,992)"><use href="#g28" x="0"/><use href="#g67" x="8"/><use href="#g64" x="16"/><use href="#g62" x="24"/><use href="#g29" x="32"/><use href="#g71" x="48"/><use href="#g75" x="56"/><use href="#g69" x="64"/><use href="#g74" x="72"/></g>
<g fill="#aaaaaa" transform="translate(0,1008)"><use href="#g6e" x="0"/><use href="#g61" x="8"/><use href="#g62" x="16"/><use href="#g69" x="24"/><use href="#g6a" x="32"/><use href="#g61" x="40"/><use href="#g63" x="48"/><use href="#g7a" x="56"/><use href="#g6c" x="64"/><use href="#g65" x="72"/><use href="#g77" x="80"/><use href="#g65" x="88"/><use href="#g6c" x="96"/><use href="#g69" x="104"/><use href="#g40" x="112"/><use href="#g73" x="120"/><use href="#g7a" x="128"/><use href="#g61" x="136"/><use href="#g72" x="144"/><use href="#g6f" x="152"/><use href="#g74" x="160"/><use href="#g6b" x="168"/><use href="#g61" x="176"/><use href="#g3a" x="184"/><use href="#g2f" x="192"/><use href="#g6d" x="200"/><use href="#g6e" x="208"/><use href="#g74" x="216"/><use href="#g2f" x="224"/><use href="#g7a" x="232"/><use href="#g65" x="240"/><use href="#g73" x="248"/><use href="#g74" x="256"/><use href="#g2f" x="264"/><use href="#g68" x="272"/><use href="#g74" x="280"/><use href="#g6f" x="288"/><use href="#g70" x="296"/><use href="#g2f" x="304"/><use href="#g67" x="312"/><use href="#g70" x="320"/><use href="#g6d" x="328"/><use href="#g2f" x="336"/><use href="#g73" x="344"/><use href="#g72" x="352"/><use href="#g63" x="360"/><use href="#g24" x="368"/></g>
</svg>
</body></html>
